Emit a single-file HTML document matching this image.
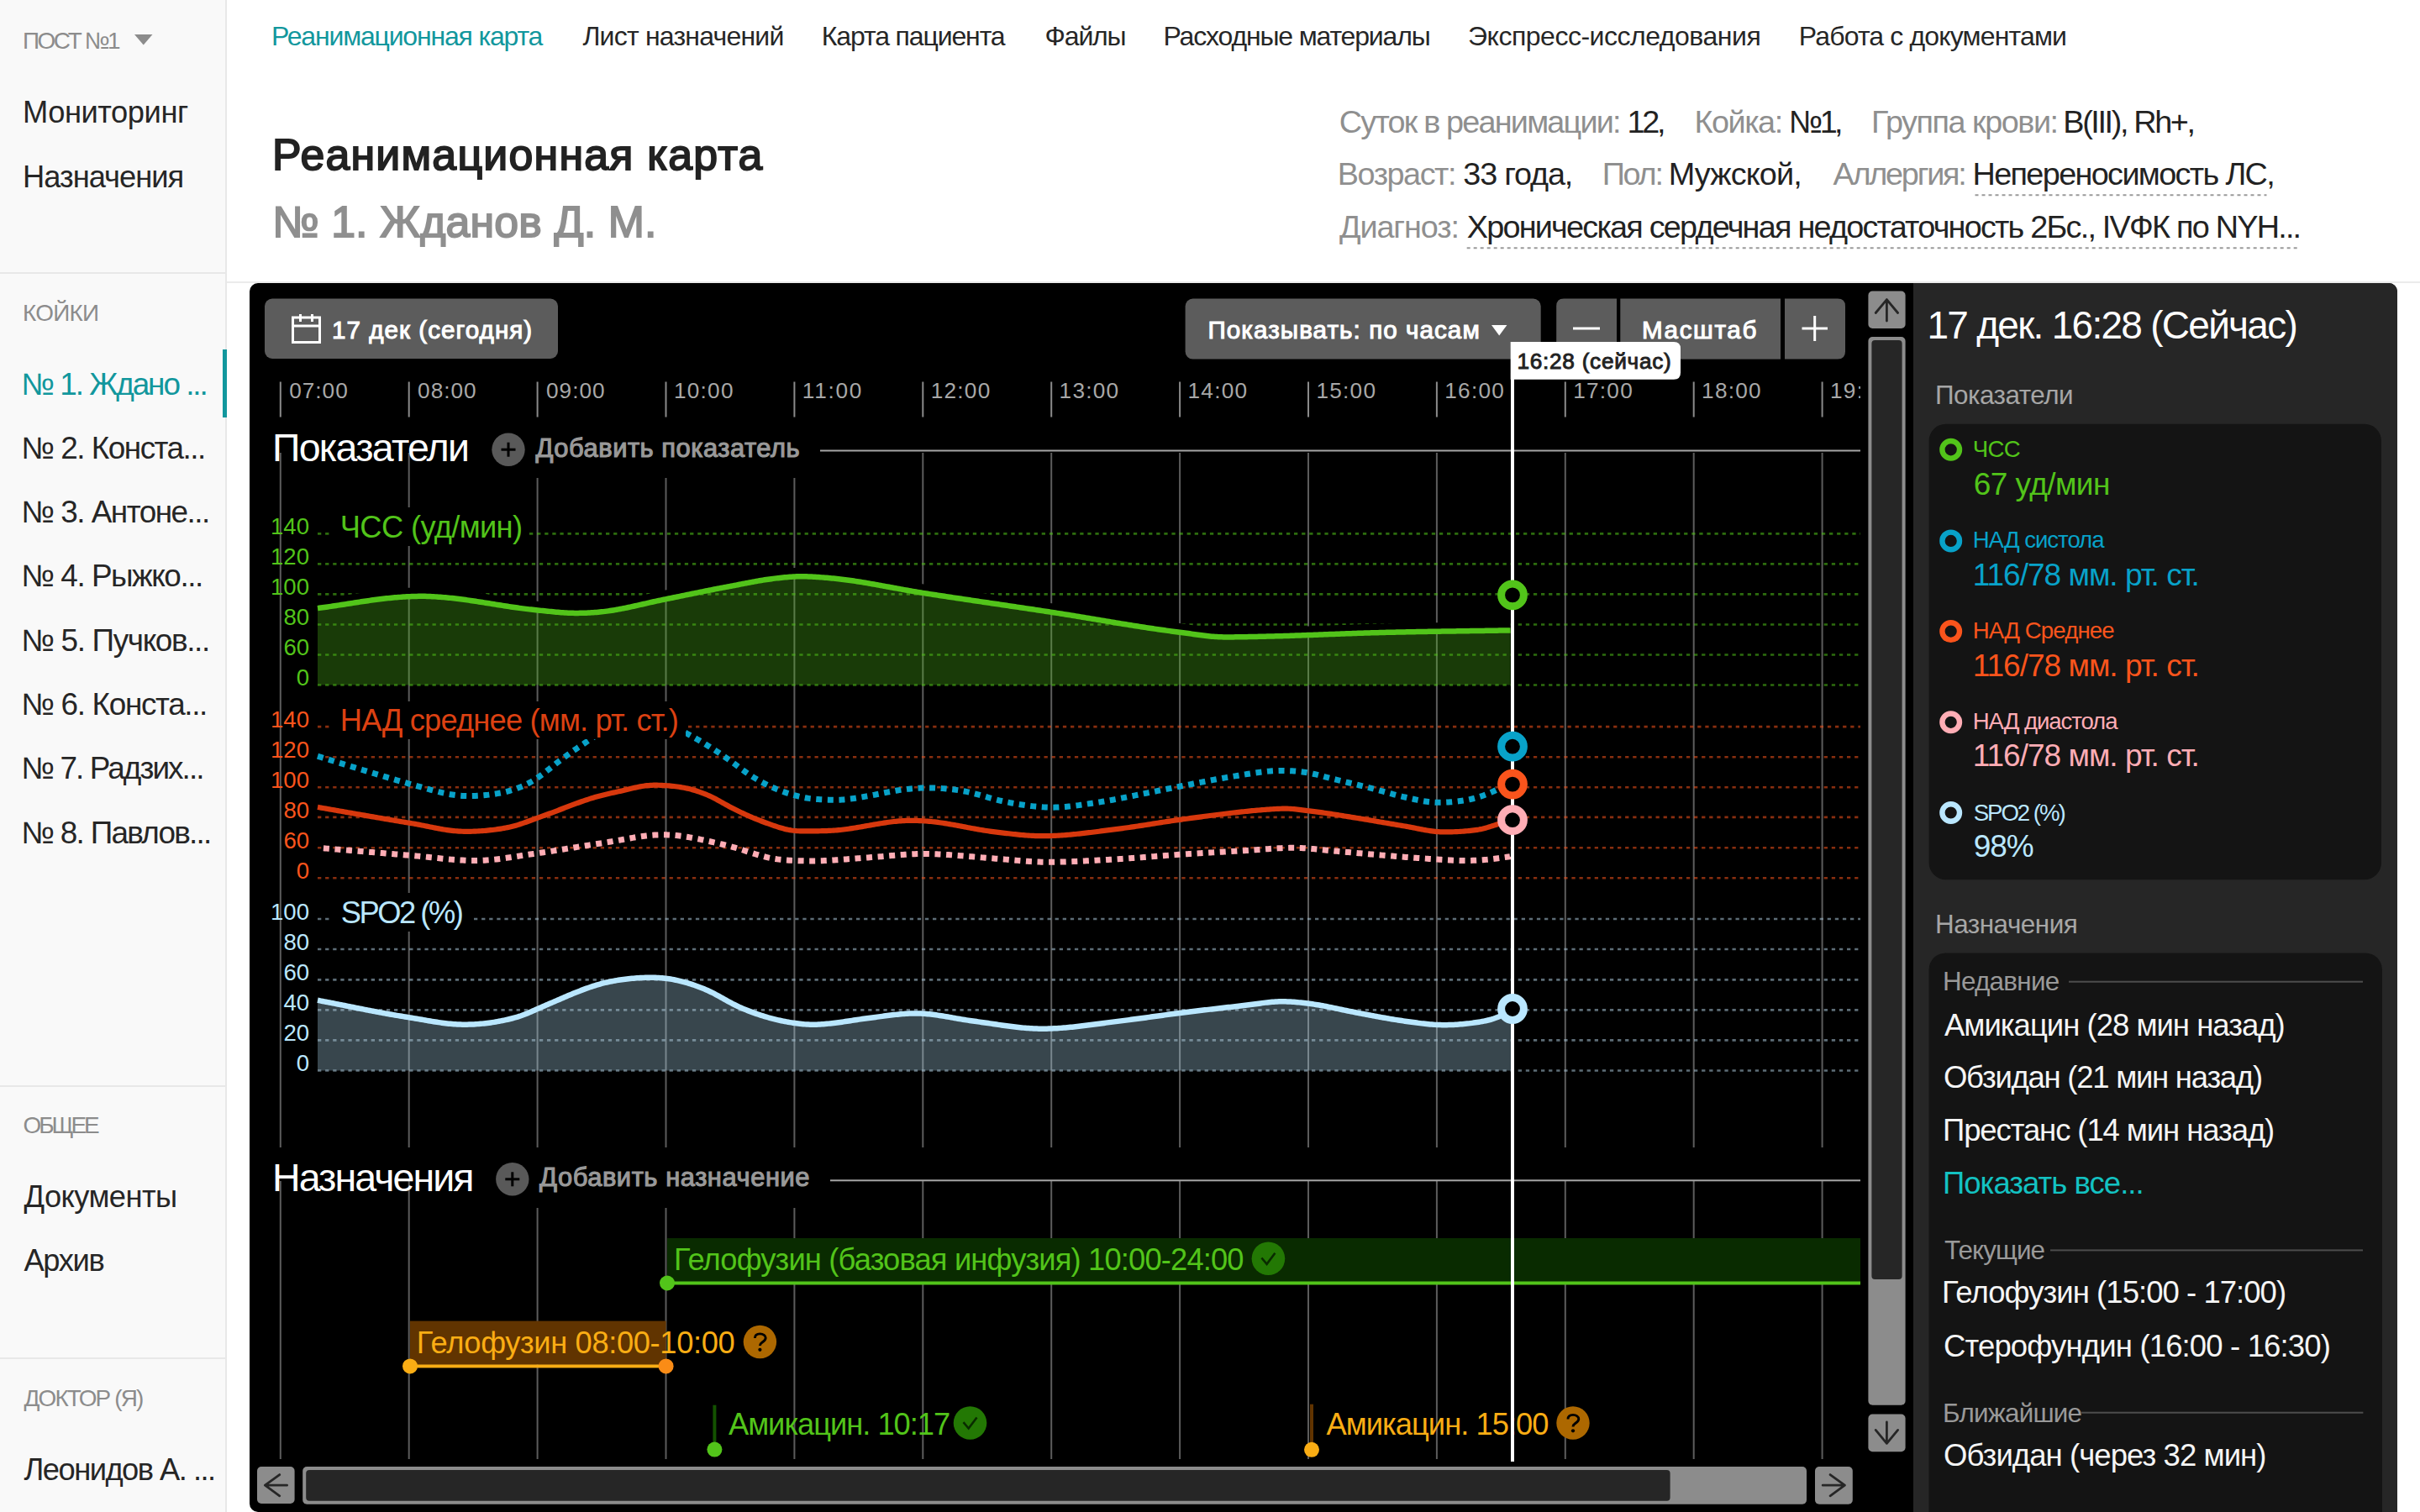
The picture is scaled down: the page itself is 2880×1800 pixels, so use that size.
<!DOCTYPE html>
<html><head><meta charset="utf-8"><style>
html,body{margin:0;padding:0;width:2880px;height:1800px;overflow:hidden;background:#fff;}
body{position:relative;font-family:"Liberation Sans", sans-serif;}
.t{position:absolute;line-height:0;white-space:nowrap;font-family:"Liberation Sans", sans-serif;}
.abs{position:absolute;}
svg{position:absolute;left:0;top:0;}
</style></head><body>
<div class="abs" style="left:0;top:0;width:268px;height:1800px;background:#f9f9f9;"></div>
<div class="abs" style="left:268px;top:0;width:2px;height:1800px;background:#e8e8e8;"></div>
<div class="abs" style="left:0;top:324px;width:268px;height:2px;background:#e8e8e8;"></div>
<div class="abs" style="left:0;top:1291.5px;width:268px;height:2px;background:#e8e8e8;"></div>
<div class="abs" style="left:0;top:1616px;width:268px;height:2px;background:#e8e8e8;"></div>
<div class="abs" style="left:265px;top:416px;width:5px;height:81px;background:#12979d;"></div>
<div class="abs" style="left:270px;top:335px;width:2610px;height:2px;background:#ebebeb;"></div>
<div class="abs" style="left:297px;top:337px;width:2556px;height:1463px;background:#000;border-radius:10px 10px 0 10px;"></div>
<div class="abs" style="left:2277px;top:337px;width:576px;height:1463px;background:#262626;border-radius:0 10px 0 0;"></div>
<svg width="2880" height="1800" viewBox="0 0 2880 1800">
<rect x="315" y="355.5" width="349" height="71.5" rx="9" fill="#5c5c5c"/>
<g fill="none" stroke="#fff" stroke-width="3"><rect x="348.5" y="378" width="32" height="29.5"/><line x1="348.5" y1="388" x2="380.5" y2="388"/><line x1="357.5" y1="374" x2="357.5" y2="383"/><line x1="371.5" y1="374" x2="371.5" y2="383"/></g>
<rect x="1410.6" y="355.5" width="423.1" height="72.1" rx="9" fill="#5c5c5c"/>
<path d="M1775,387 H1793.4 L1784.2,399.5 Z" fill="#fff"/>
<path d="M1861,355.5 H1924 V427.6 H1861 Q1852.2,427.6 1852.2,418.6 V364.5 Q1852.2,355.5 1861,355.5 Z" fill="#5c5c5c"/>
<rect x="1928.3" y="355.5" width="190.7" height="72.1" fill="#5c5c5c"/>
<path d="M2124,355.5 H2187 Q2196,355.5 2196,364.5 V418.6 Q2196,427.6 2187,427.6 H2124 Z" fill="#5c5c5c"/>
<rect x="1872" y="389.5" width="32" height="3" fill="#fff"/>
<rect x="2144.5" y="389.5" width="30.5" height="3" fill="#fff"/>
<rect x="2158.2" y="376" width="3" height="30" fill="#fff"/>
<rect x="2295.6" y="504.8" width="538.4" height="542.4" rx="20" fill="#141414"/>
<rect x="2295.5" y="1134.4" width="539.5" height="720" rx="20" fill="#141414"/>
<rect x="2462" y="1167.7" width="350" height="2" fill="#4d4d4d"/>
<rect x="2440" y="1487.4" width="372" height="2" fill="#4d4d4d"/>
<circle cx="2321.7" cy="535.3" r="10.3" fill="none" stroke="#52c41a" stroke-width="6.4"/>
<circle cx="2321.7" cy="643.9" r="10.3" fill="none" stroke="#08a2c9" stroke-width="6.4"/>
<circle cx="2321.7" cy="751.6" r="10.3" fill="none" stroke="#fa541c" stroke-width="6.4"/>
<circle cx="2321.7" cy="859.8" r="10.3" fill="none" stroke="#ffadb5" stroke-width="6.4"/>
<circle cx="2321.7" cy="967.5" r="10.3" fill="none" stroke="#bae7ff" stroke-width="6.4"/>
<line x1="2350.5" y1="232.3" x2="2697.5" y2="232.3" stroke="#9a9a9a" stroke-width="2" stroke-dasharray="4 4"/>
<line x1="1745.7" y1="295.2" x2="2735.5" y2="295.2" stroke="#9a9a9a" stroke-width="2" stroke-dasharray="4 4"/>
<path d="M160,41 H181.5 L170.75,53.6 Z" fill="#8c8c8c"/>
<rect x="332.8" y="539" width="2" height="827" fill="rgba(255,255,255,0.36)"/>
<rect x="332.8" y="1406" width="2" height="331" fill="rgba(255,255,255,0.36)"/>
<rect x="485.7" y="539" width="2" height="827" fill="rgba(255,255,255,0.36)"/>
<rect x="485.7" y="1406" width="2" height="331" fill="rgba(255,255,255,0.36)"/>
<rect x="638.6" y="539" width="2" height="827" fill="rgba(255,255,255,0.36)"/>
<rect x="638.6" y="1406" width="2" height="331" fill="rgba(255,255,255,0.36)"/>
<rect x="791.5" y="539" width="2" height="827" fill="rgba(255,255,255,0.36)"/>
<rect x="791.5" y="1406" width="2" height="331" fill="rgba(255,255,255,0.36)"/>
<rect x="944.4" y="539" width="2" height="827" fill="rgba(255,255,255,0.36)"/>
<rect x="944.4" y="1406" width="2" height="331" fill="rgba(255,255,255,0.36)"/>
<rect x="1097.3" y="539" width="2" height="827" fill="rgba(255,255,255,0.36)"/>
<rect x="1097.3" y="1406" width="2" height="331" fill="rgba(255,255,255,0.36)"/>
<rect x="1250.2" y="539" width="2" height="827" fill="rgba(255,255,255,0.36)"/>
<rect x="1250.2" y="1406" width="2" height="331" fill="rgba(255,255,255,0.36)"/>
<rect x="1403.1" y="539" width="2" height="827" fill="rgba(255,255,255,0.36)"/>
<rect x="1403.1" y="1406" width="2" height="331" fill="rgba(255,255,255,0.36)"/>
<rect x="1556.0" y="539" width="2" height="827" fill="rgba(255,255,255,0.36)"/>
<rect x="1556.0" y="1406" width="2" height="331" fill="rgba(255,255,255,0.36)"/>
<rect x="1708.9" y="539" width="2" height="827" fill="rgba(255,255,255,0.36)"/>
<rect x="1708.9" y="1406" width="2" height="331" fill="rgba(255,255,255,0.36)"/>
<rect x="1861.8" y="539" width="2" height="827" fill="rgba(255,255,255,0.36)"/>
<rect x="1861.8" y="1406" width="2" height="331" fill="rgba(255,255,255,0.36)"/>
<rect x="2014.7" y="539" width="2" height="827" fill="rgba(255,255,255,0.36)"/>
<rect x="2014.7" y="1406" width="2" height="331" fill="rgba(255,255,255,0.36)"/>
<rect x="2167.6" y="539" width="2" height="827" fill="rgba(255,255,255,0.36)"/>
<rect x="2167.6" y="1406" width="2" height="331" fill="rgba(255,255,255,0.36)"/>
<rect x="570" y="537" width="406" height="32" fill="#000"/>
<rect x="575" y="1402" width="413" height="36" fill="#000"/>
<rect x="396" y="604" width="234" height="46" fill="#000"/>
<rect x="396" y="835" width="420" height="45" fill="#000"/>
<rect x="396" y="1063" width="166" height="46" fill="#000"/>
<path d="M378.0,724.10 L380.0,723.83 L382.0,723.56 L384.0,723.28 L386.0,723.00 L388.0,722.72 L390.0,722.44 L392.0,722.15 L394.0,721.86 L396.0,721.56 L398.0,721.26 L400.0,720.96 L402.0,720.66 L404.0,720.35 L406.0,720.04 L408.0,719.73 L410.0,719.42 L412.0,719.11 L414.0,718.80 L416.0,718.49 L418.0,718.18 L420.0,717.86 L422.0,717.56 L424.0,717.25 L426.0,716.94 L428.0,716.64 L430.0,716.33 L432.0,716.03 L434.0,715.74 L436.0,715.45 L438.0,715.16 L440.0,714.87 L442.0,714.59 L444.0,714.32 L446.0,714.05 L448.0,713.78 L450.0,713.53 L452.0,713.27 L454.0,713.03 L456.0,712.79 L458.0,712.56 L460.0,712.34 L462.0,712.12 L464.0,711.91 L466.0,711.72 L468.0,711.53 L470.0,711.35 L472.0,711.18 L474.0,711.02 L476.0,710.87 L478.0,710.73 L480.0,710.60 L482.0,710.48 L484.0,710.37 L486.0,710.27 L488.0,710.18 L490.0,710.10 L492.0,710.03 L494.0,709.96 L496.0,709.91 L498.0,709.87 L500.0,709.84 L502.0,709.83 L504.0,709.84 L506.0,709.86 L508.0,709.91 L510.0,709.97 L512.0,710.05 L514.0,710.15 L516.0,710.26 L518.0,710.38 L520.0,710.51 L522.0,710.65 L524.0,710.80 L526.0,710.96 L528.0,711.13 L530.0,711.30 L532.0,711.49 L534.0,711.68 L536.0,711.89 L538.0,712.10 L540.0,712.32 L542.0,712.55 L544.0,712.79 L546.0,713.03 L548.0,713.28 L550.0,713.54 L552.0,713.81 L554.0,714.08 L556.0,714.36 L558.0,714.64 L560.0,714.93 L562.0,715.22 L564.0,715.52 L566.0,715.82 L568.0,716.13 L570.0,716.44 L572.0,716.75 L574.0,717.06 L576.0,717.38 L578.0,717.69 L580.0,718.01 L582.0,718.33 L584.0,718.65 L586.0,718.98 L588.0,719.30 L590.0,719.62 L592.0,719.94 L594.0,720.25 L596.0,720.57 L598.0,720.89 L600.0,721.20 L602.0,721.51 L604.0,721.82 L606.0,722.12 L608.0,722.42 L610.0,722.72 L612.0,723.01 L614.0,723.29 L616.0,723.58 L618.0,723.85 L620.0,724.12 L622.0,724.39 L624.0,724.64 L626.0,724.89 L628.0,725.14 L630.0,725.37 L632.0,725.60 L634.0,725.82 L636.0,726.04 L638.0,726.25 L640.0,726.46 L642.0,726.67 L644.0,726.87 L646.0,727.07 L648.0,727.28 L650.0,727.48 L652.0,727.69 L654.0,727.89 L656.0,728.09 L658.0,728.29 L660.0,728.48 L662.0,728.66 L664.0,728.84 L666.0,729.01 L668.0,729.17 L670.0,729.31 L672.0,729.45 L674.0,729.56 L676.0,729.66 L678.0,729.74 L680.0,729.81 L682.0,729.86 L684.0,729.88 L686.0,729.89 L688.0,729.89 L690.0,729.87 L692.0,729.83 L694.0,729.78 L696.0,729.71 L698.0,729.63 L700.0,729.54 L702.0,729.44 L704.0,729.32 L706.0,729.19 L708.0,729.05 L710.0,728.89 L712.0,728.73 L714.0,728.54 L716.0,728.34 L718.0,728.12 L720.0,727.89 L722.0,727.64 L724.0,727.37 L726.0,727.08 L728.0,726.78 L730.0,726.46 L732.0,726.13 L734.0,725.78 L736.0,725.42 L738.0,725.05 L740.0,724.67 L742.0,724.27 L744.0,723.87 L746.0,723.46 L748.0,723.04 L750.0,722.61 L752.0,722.17 L754.0,721.73 L756.0,721.28 L758.0,720.83 L760.0,720.38 L762.0,719.93 L764.0,719.47 L766.0,719.01 L768.0,718.55 L770.0,718.10 L772.0,717.64 L774.0,717.19 L776.0,716.74 L778.0,716.29 L780.0,715.85 L782.0,715.42 L784.0,714.99 L786.0,714.56 L788.0,714.14 L790.0,713.73 L792.0,713.32 L794.0,712.91 L796.0,712.51 L798.0,712.10 L800.0,711.70 L802.0,711.29 L804.0,710.89 L806.0,710.48 L808.0,710.07 L810.0,709.67 L812.0,709.26 L814.0,708.85 L816.0,708.44 L818.0,708.03 L820.0,707.62 L822.0,707.21 L824.0,706.80 L826.0,706.39 L828.0,705.98 L830.0,705.57 L832.0,705.16 L834.0,704.75 L836.0,704.35 L838.0,703.94 L840.0,703.54 L842.0,703.14 L844.0,702.74 L846.0,702.34 L848.0,701.94 L850.0,701.55 L852.0,701.16 L854.0,700.77 L856.0,700.38 L858.0,700.00 L860.0,699.62 L862.0,699.24 L864.0,698.86 L866.0,698.48 L868.0,698.10 L870.0,697.72 L872.0,697.34 L874.0,696.96 L876.0,696.57 L878.0,696.19 L880.0,695.80 L882.0,695.41 L884.0,695.03 L886.0,694.64 L888.0,694.26 L890.0,693.87 L892.0,693.50 L894.0,693.12 L896.0,692.75 L898.0,692.38 L900.0,692.02 L902.0,691.67 L904.0,691.32 L906.0,690.99 L908.0,690.66 L910.0,690.33 L912.0,690.02 L914.0,689.72 L916.0,689.44 L918.0,689.16 L920.0,688.89 L922.0,688.64 L924.0,688.39 L926.0,688.16 L928.0,687.94 L930.0,687.72 L932.0,687.52 L934.0,687.32 L936.0,687.14 L938.0,686.97 L940.0,686.81 L942.0,686.66 L944.0,686.54 L946.0,686.44 L948.0,686.35 L950.0,686.29 L952.0,686.26 L954.0,686.25 L956.0,686.26 L958.0,686.29 L960.0,686.34 L962.0,686.41 L964.0,686.49 L966.0,686.59 L968.0,686.70 L970.0,686.82 L972.0,686.95 L974.0,687.09 L976.0,687.23 L978.0,687.38 L980.0,687.54 L982.0,687.70 L984.0,687.86 L986.0,688.04 L988.0,688.22 L990.0,688.40 L992.0,688.59 L994.0,688.80 L996.0,689.01 L998.0,689.23 L1000.0,689.46 L1002.0,689.70 L1004.0,689.94 L1006.0,690.20 L1008.0,690.46 L1010.0,690.74 L1012.0,691.01 L1014.0,691.30 L1016.0,691.59 L1018.0,691.89 L1020.0,692.20 L1022.0,692.51 L1024.0,692.83 L1026.0,693.16 L1028.0,693.49 L1030.0,693.82 L1032.0,694.16 L1034.0,694.50 L1036.0,694.85 L1038.0,695.20 L1040.0,695.55 L1042.0,695.91 L1044.0,696.26 L1046.0,696.63 L1048.0,696.99 L1050.0,697.35 L1052.0,697.72 L1054.0,698.09 L1056.0,698.46 L1058.0,698.82 L1060.0,699.19 L1062.0,699.56 L1064.0,699.93 L1066.0,700.30 L1068.0,700.66 L1070.0,701.03 L1072.0,701.39 L1074.0,701.75 L1076.0,702.11 L1078.0,702.47 L1080.0,702.82 L1082.0,703.17 L1084.0,703.52 L1086.0,703.86 L1088.0,704.20 L1090.0,704.54 L1092.0,704.87 L1094.0,705.20 L1096.0,705.52 L1098.0,705.84 L1100.0,706.15 L1102.0,706.47 L1104.0,706.78 L1106.0,707.09 L1108.0,707.40 L1110.0,707.70 L1112.0,708.01 L1114.0,708.32 L1116.0,708.62 L1118.0,708.92 L1120.0,709.23 L1122.0,709.53 L1124.0,709.83 L1126.0,710.13 L1128.0,710.44 L1130.0,710.74 L1132.0,711.04 L1134.0,711.34 L1136.0,711.64 L1138.0,711.94 L1140.0,712.24 L1142.0,712.53 L1144.0,712.83 L1146.0,713.13 L1148.0,713.43 L1150.0,713.73 L1152.0,714.02 L1154.0,714.32 L1156.0,714.62 L1158.0,714.91 L1160.0,715.21 L1162.0,715.50 L1164.0,715.80 L1166.0,716.10 L1168.0,716.39 L1170.0,716.69 L1172.0,716.98 L1174.0,717.28 L1176.0,717.57 L1178.0,717.87 L1180.0,718.16 L1182.0,718.46 L1184.0,718.75 L1186.0,719.05 L1188.0,719.34 L1190.0,719.64 L1192.0,719.93 L1194.0,720.23 L1196.0,720.53 L1198.0,720.82 L1200.0,721.12 L1202.0,721.41 L1204.0,721.71 L1206.0,722.01 L1208.0,722.30 L1210.0,722.60 L1212.0,722.90 L1214.0,723.19 L1216.0,723.49 L1218.0,723.79 L1220.0,724.09 L1222.0,724.38 L1224.0,724.68 L1226.0,724.98 L1228.0,725.28 L1230.0,725.58 L1232.0,725.88 L1234.0,726.18 L1236.0,726.48 L1238.0,726.79 L1240.0,727.09 L1242.0,727.39 L1244.0,727.69 L1246.0,728.00 L1248.0,728.30 L1250.0,728.61 L1252.0,728.92 L1254.0,729.22 L1256.0,729.53 L1258.0,729.84 L1260.0,730.16 L1262.0,730.47 L1264.0,730.79 L1266.0,731.10 L1268.0,731.42 L1270.0,731.74 L1272.0,732.06 L1274.0,732.39 L1276.0,732.71 L1278.0,733.04 L1280.0,733.36 L1282.0,733.69 L1284.0,734.02 L1286.0,734.35 L1288.0,734.68 L1290.0,735.01 L1292.0,735.34 L1294.0,735.67 L1296.0,736.01 L1298.0,736.34 L1300.0,736.68 L1302.0,737.01 L1304.0,737.34 L1306.0,737.68 L1308.0,738.01 L1310.0,738.35 L1312.0,738.68 L1314.0,739.02 L1316.0,739.35 L1318.0,739.69 L1320.0,740.02 L1322.0,740.35 L1324.0,740.69 L1326.0,741.02 L1328.0,741.35 L1330.0,741.68 L1332.0,742.01 L1334.0,742.34 L1336.0,742.67 L1338.0,742.99 L1340.0,743.32 L1342.0,743.65 L1344.0,743.97 L1346.0,744.29 L1348.0,744.61 L1350.0,744.93 L1352.0,745.25 L1354.0,745.56 L1356.0,745.88 L1358.0,746.19 L1360.0,746.50 L1362.0,746.81 L1364.0,747.12 L1366.0,747.42 L1368.0,747.72 L1370.0,748.02 L1372.0,748.32 L1374.0,748.61 L1376.0,748.91 L1378.0,749.20 L1380.0,749.48 L1382.0,749.77 L1384.0,750.05 L1386.0,750.33 L1388.0,750.60 L1390.0,750.88 L1392.0,751.15 L1394.0,751.41 L1396.0,751.68 L1398.0,751.94 L1400.0,752.20 L1402.0,752.46 L1404.0,752.72 L1406.0,752.98 L1408.0,753.25 L1410.0,753.51 L1412.0,753.78 L1414.0,754.06 L1416.0,754.34 L1418.0,754.62 L1420.0,754.91 L1422.0,755.19 L1424.0,755.48 L1426.0,755.76 L1428.0,756.03 L1430.0,756.30 L1432.0,756.56 L1434.0,756.81 L1436.0,757.05 L1438.0,757.27 L1440.0,757.48 L1442.0,757.67 L1444.0,757.84 L1446.0,757.98 L1448.0,758.11 L1450.0,758.21 L1452.0,758.29 L1454.0,758.35 L1456.0,758.40 L1458.0,758.42 L1460.0,758.44 L1462.0,758.44 L1464.0,758.43 L1466.0,758.42 L1468.0,758.40 L1470.0,758.37 L1472.0,758.35 L1474.0,758.32 L1476.0,758.28 L1478.0,758.25 L1480.0,758.21 L1482.0,758.17 L1484.0,758.13 L1486.0,758.09 L1488.0,758.05 L1490.0,758.01 L1492.0,757.97 L1494.0,757.93 L1496.0,757.88 L1498.0,757.84 L1500.0,757.80 L1502.0,757.75 L1504.0,757.71 L1506.0,757.66 L1508.0,757.62 L1510.0,757.57 L1512.0,757.52 L1514.0,757.47 L1516.0,757.42 L1518.0,757.36 L1520.0,757.31 L1522.0,757.25 L1524.0,757.19 L1526.0,757.13 L1528.0,757.07 L1530.0,757.01 L1532.0,756.95 L1534.0,756.88 L1536.0,756.82 L1538.0,756.75 L1540.0,756.68 L1542.0,756.61 L1544.0,756.54 L1546.0,756.47 L1548.0,756.40 L1550.0,756.33 L1552.0,756.26 L1554.0,756.19 L1556.0,756.11 L1558.0,756.04 L1560.0,755.96 L1562.0,755.89 L1564.0,755.81 L1566.0,755.74 L1568.0,755.66 L1570.0,755.58 L1572.0,755.51 L1574.0,755.43 L1576.0,755.35 L1578.0,755.28 L1580.0,755.20 L1582.0,755.12 L1584.0,755.05 L1586.0,754.97 L1588.0,754.89 L1590.0,754.82 L1592.0,754.74 L1594.0,754.67 L1596.0,754.59 L1598.0,754.52 L1600.0,754.44 L1602.0,754.37 L1604.0,754.29 L1606.0,754.22 L1608.0,754.15 L1610.0,754.08 L1612.0,754.01 L1614.0,753.94 L1616.0,753.87 L1618.0,753.80 L1620.0,753.74 L1622.0,753.67 L1624.0,753.60 L1626.0,753.54 L1628.0,753.48 L1630.0,753.42 L1632.0,753.36 L1634.0,753.30 L1636.0,753.24 L1638.0,753.18 L1640.0,753.13 L1642.0,753.08 L1644.0,753.02 L1646.0,752.97 L1648.0,752.92 L1650.0,752.87 L1652.0,752.82 L1654.0,752.78 L1656.0,752.73 L1658.0,752.68 L1660.0,752.64 L1662.0,752.59 L1664.0,752.55 L1666.0,752.51 L1668.0,752.47 L1670.0,752.43 L1672.0,752.38 L1674.0,752.34 L1676.0,752.30 L1678.0,752.27 L1680.0,752.23 L1682.0,752.19 L1684.0,752.15 L1686.0,752.12 L1688.0,752.08 L1690.0,752.04 L1692.0,752.01 L1694.0,751.97 L1696.0,751.94 L1698.0,751.91 L1700.0,751.87 L1702.0,751.84 L1704.0,751.81 L1706.0,751.78 L1708.0,751.74 L1710.0,751.71 L1712.0,751.68 L1714.0,751.65 L1716.0,751.62 L1718.0,751.59 L1720.0,751.56 L1722.0,751.53 L1724.0,751.50 L1726.0,751.47 L1728.0,751.44 L1730.0,751.41 L1732.0,751.38 L1734.0,751.35 L1736.0,751.32 L1738.0,751.29 L1740.0,751.27 L1742.0,751.24 L1744.0,751.21 L1746.0,751.18 L1748.0,751.15 L1750.0,751.12 L1752.0,751.09 L1754.0,751.07 L1756.0,751.04 L1758.0,751.01 L1760.0,750.98 L1762.0,750.95 L1764.0,750.92 L1766.0,750.89 L1768.0,750.86 L1770.0,750.83 L1772.0,750.80 L1774.0,750.77 L1776.0,750.74 L1778.0,750.71 L1780.0,750.68 L1782.0,750.65 L1784.0,750.62 L1786.0,750.59 L1788.0,750.56 L1790.0,750.52 L1792.0,750.49 L1794.0,750.46 L1796.0,750.43 L1797.5,750.40 L1797.5,815.5 L378.0,815.5 Z" fill="#52c41a" fill-opacity="0.3"/>
<path d="M378.0,1190.80 L380.0,1191.18 L382.0,1191.57 L384.0,1191.95 L386.0,1192.33 L388.0,1192.72 L390.0,1193.11 L392.0,1193.50 L394.0,1193.89 L396.0,1194.28 L398.0,1194.67 L400.0,1195.07 L402.0,1195.46 L404.0,1195.86 L406.0,1196.26 L408.0,1196.66 L410.0,1197.05 L412.0,1197.45 L414.0,1197.85 L416.0,1198.25 L418.0,1198.65 L420.0,1199.05 L422.0,1199.44 L424.0,1199.84 L426.0,1200.24 L428.0,1200.63 L430.0,1201.03 L432.0,1201.42 L434.0,1201.82 L436.0,1202.21 L438.0,1202.60 L440.0,1202.98 L442.0,1203.37 L444.0,1203.75 L446.0,1204.13 L448.0,1204.51 L450.0,1204.89 L452.0,1205.26 L454.0,1205.64 L456.0,1206.00 L458.0,1206.37 L460.0,1206.73 L462.0,1207.09 L464.0,1207.45 L466.0,1207.80 L468.0,1208.15 L470.0,1208.49 L472.0,1208.83 L474.0,1209.17 L476.0,1209.50 L478.0,1209.83 L480.0,1210.16 L482.0,1210.48 L484.0,1210.81 L486.0,1211.13 L488.0,1211.45 L490.0,1211.78 L492.0,1212.11 L494.0,1212.44 L496.0,1212.78 L498.0,1213.12 L500.0,1213.46 L502.0,1213.80 L504.0,1214.15 L506.0,1214.49 L508.0,1214.84 L510.0,1215.18 L512.0,1215.52 L514.0,1215.85 L516.0,1216.18 L518.0,1216.50 L520.0,1216.81 L522.0,1217.11 L524.0,1217.40 L526.0,1217.68 L528.0,1217.95 L530.0,1218.20 L532.0,1218.43 L534.0,1218.65 L536.0,1218.85 L538.0,1219.02 L540.0,1219.18 L542.0,1219.32 L544.0,1219.43 L546.0,1219.53 L548.0,1219.60 L550.0,1219.64 L552.0,1219.67 L554.0,1219.67 L556.0,1219.65 L558.0,1219.61 L560.0,1219.55 L562.0,1219.47 L564.0,1219.38 L566.0,1219.26 L568.0,1219.13 L570.0,1218.98 L572.0,1218.81 L574.0,1218.63 L576.0,1218.43 L578.0,1218.21 L580.0,1217.97 L582.0,1217.71 L584.0,1217.44 L586.0,1217.15 L588.0,1216.84 L590.0,1216.51 L592.0,1216.17 L594.0,1215.81 L596.0,1215.43 L598.0,1215.03 L600.0,1214.62 L602.0,1214.18 L604.0,1213.73 L606.0,1213.26 L608.0,1212.77 L610.0,1212.26 L612.0,1211.72 L614.0,1211.16 L616.0,1210.56 L618.0,1209.92 L620.0,1209.25 L622.0,1208.53 L624.0,1207.77 L626.0,1206.98 L628.0,1206.15 L630.0,1205.30 L632.0,1204.43 L634.0,1203.55 L636.0,1202.66 L638.0,1201.78 L640.0,1200.90 L642.0,1200.03 L644.0,1199.16 L646.0,1198.30 L648.0,1197.43 L650.0,1196.57 L652.0,1195.71 L654.0,1194.84 L656.0,1193.98 L658.0,1193.11 L660.0,1192.24 L662.0,1191.37 L664.0,1190.50 L666.0,1189.64 L668.0,1188.77 L670.0,1187.91 L672.0,1187.05 L674.0,1186.20 L676.0,1185.35 L678.0,1184.51 L680.0,1183.68 L682.0,1182.86 L684.0,1182.04 L686.0,1181.24 L688.0,1180.44 L690.0,1179.66 L692.0,1178.90 L694.0,1178.14 L696.0,1177.40 L698.0,1176.68 L700.0,1175.97 L702.0,1175.28 L704.0,1174.60 L706.0,1173.95 L708.0,1173.31 L710.0,1172.70 L712.0,1172.11 L714.0,1171.54 L716.0,1170.99 L718.0,1170.47 L720.0,1169.97 L722.0,1169.50 L724.0,1169.05 L726.0,1168.62 L728.0,1168.22 L730.0,1167.84 L732.0,1167.48 L734.0,1167.14 L736.0,1166.82 L738.0,1166.51 L740.0,1166.23 L742.0,1165.96 L744.0,1165.70 L746.0,1165.46 L748.0,1165.24 L750.0,1165.03 L752.0,1164.84 L754.0,1164.66 L756.0,1164.49 L758.0,1164.35 L760.0,1164.21 L762.0,1164.09 L764.0,1163.99 L766.0,1163.90 L768.0,1163.83 L770.0,1163.78 L772.0,1163.75 L774.0,1163.73 L776.0,1163.74 L778.0,1163.76 L780.0,1163.82 L782.0,1163.90 L784.0,1164.01 L786.0,1164.14 L788.0,1164.31 L790.0,1164.50 L792.0,1164.73 L794.0,1164.98 L796.0,1165.27 L798.0,1165.58 L800.0,1165.92 L802.0,1166.29 L804.0,1166.69 L806.0,1167.12 L808.0,1167.57 L810.0,1168.05 L812.0,1168.55 L814.0,1169.08 L816.0,1169.64 L818.0,1170.22 L820.0,1170.82 L822.0,1171.45 L824.0,1172.10 L826.0,1172.77 L828.0,1173.47 L830.0,1174.19 L832.0,1174.94 L834.0,1175.71 L836.0,1176.50 L838.0,1177.33 L840.0,1178.18 L842.0,1179.07 L844.0,1179.99 L846.0,1180.95 L848.0,1181.94 L850.0,1182.97 L852.0,1184.02 L854.0,1185.10 L856.0,1186.20 L858.0,1187.32 L860.0,1188.44 L862.0,1189.57 L864.0,1190.69 L866.0,1191.80 L868.0,1192.89 L870.0,1193.96 L872.0,1195.01 L874.0,1196.02 L876.0,1197.01 L878.0,1197.96 L880.0,1198.88 L882.0,1199.78 L884.0,1200.65 L886.0,1201.49 L888.0,1202.31 L890.0,1203.11 L892.0,1203.89 L894.0,1204.65 L896.0,1205.40 L898.0,1206.12 L900.0,1206.83 L902.0,1207.51 L904.0,1208.18 L906.0,1208.83 L908.0,1209.46 L910.0,1210.08 L912.0,1210.67 L914.0,1211.25 L916.0,1211.81 L918.0,1212.35 L920.0,1212.87 L922.0,1213.37 L924.0,1213.86 L926.0,1214.32 L928.0,1214.77 L930.0,1215.20 L932.0,1215.62 L934.0,1216.01 L936.0,1216.39 L938.0,1216.75 L940.0,1217.09 L942.0,1217.41 L944.0,1217.72 L946.0,1218.01 L948.0,1218.29 L950.0,1218.55 L952.0,1218.78 L954.0,1219.00 L956.0,1219.20 L958.0,1219.37 L960.0,1219.51 L962.0,1219.62 L964.0,1219.70 L966.0,1219.75 L968.0,1219.76 L970.0,1219.73 L972.0,1219.68 L974.0,1219.59 L976.0,1219.47 L978.0,1219.34 L980.0,1219.18 L982.0,1219.01 L984.0,1218.83 L986.0,1218.63 L988.0,1218.42 L990.0,1218.21 L992.0,1217.98 L994.0,1217.74 L996.0,1217.48 L998.0,1217.22 L1000.0,1216.95 L1002.0,1216.67 L1004.0,1216.38 L1006.0,1216.08 L1008.0,1215.78 L1010.0,1215.48 L1012.0,1215.17 L1014.0,1214.87 L1016.0,1214.56 L1018.0,1214.25 L1020.0,1213.95 L1022.0,1213.65 L1024.0,1213.36 L1026.0,1213.07 L1028.0,1212.79 L1030.0,1212.51 L1032.0,1212.24 L1034.0,1211.97 L1036.0,1211.70 L1038.0,1211.44 L1040.0,1211.18 L1042.0,1210.91 L1044.0,1210.65 L1046.0,1210.38 L1048.0,1210.12 L1050.0,1209.85 L1052.0,1209.59 L1054.0,1209.33 L1056.0,1209.07 L1058.0,1208.82 L1060.0,1208.57 L1062.0,1208.33 L1064.0,1208.10 L1066.0,1207.88 L1068.0,1207.67 L1070.0,1207.48 L1072.0,1207.29 L1074.0,1207.12 L1076.0,1206.97 L1078.0,1206.84 L1080.0,1206.72 L1082.0,1206.62 L1084.0,1206.55 L1086.0,1206.49 L1088.0,1206.47 L1090.0,1206.46 L1092.0,1206.48 L1094.0,1206.53 L1096.0,1206.61 L1098.0,1206.71 L1100.0,1206.83 L1102.0,1206.98 L1104.0,1207.16 L1106.0,1207.35 L1108.0,1207.57 L1110.0,1207.81 L1112.0,1208.06 L1114.0,1208.34 L1116.0,1208.62 L1118.0,1208.92 L1120.0,1209.23 L1122.0,1209.56 L1124.0,1209.89 L1126.0,1210.23 L1128.0,1210.57 L1130.0,1210.92 L1132.0,1211.27 L1134.0,1211.63 L1136.0,1211.98 L1138.0,1212.33 L1140.0,1212.68 L1142.0,1213.03 L1144.0,1213.37 L1146.0,1213.70 L1148.0,1214.02 L1150.0,1214.34 L1152.0,1214.65 L1154.0,1214.94 L1156.0,1215.23 L1158.0,1215.52 L1160.0,1215.80 L1162.0,1216.08 L1164.0,1216.36 L1166.0,1216.63 L1168.0,1216.92 L1170.0,1217.20 L1172.0,1217.49 L1174.0,1217.78 L1176.0,1218.07 L1178.0,1218.36 L1180.0,1218.66 L1182.0,1218.96 L1184.0,1219.26 L1186.0,1219.55 L1188.0,1219.85 L1190.0,1220.14 L1192.0,1220.43 L1194.0,1220.72 L1196.0,1221.00 L1198.0,1221.28 L1200.0,1221.55 L1202.0,1221.82 L1204.0,1222.07 L1206.0,1222.32 L1208.0,1222.57 L1210.0,1222.80 L1212.0,1223.02 L1214.0,1223.23 L1216.0,1223.43 L1218.0,1223.62 L1220.0,1223.80 L1222.0,1223.96 L1224.0,1224.10 L1226.0,1224.24 L1228.0,1224.35 L1230.0,1224.45 L1232.0,1224.54 L1234.0,1224.60 L1236.0,1224.65 L1238.0,1224.68 L1240.0,1224.70 L1242.0,1224.70 L1244.0,1224.68 L1246.0,1224.64 L1248.0,1224.59 L1250.0,1224.53 L1252.0,1224.45 L1254.0,1224.36 L1256.0,1224.26 L1258.0,1224.15 L1260.0,1224.02 L1262.0,1223.88 L1264.0,1223.74 L1266.0,1223.58 L1268.0,1223.41 L1270.0,1223.23 L1272.0,1223.04 L1274.0,1222.85 L1276.0,1222.65 L1278.0,1222.44 L1280.0,1222.22 L1282.0,1222.00 L1284.0,1221.77 L1286.0,1221.53 L1288.0,1221.29 L1290.0,1221.05 L1292.0,1220.80 L1294.0,1220.54 L1296.0,1220.29 L1298.0,1220.03 L1300.0,1219.76 L1302.0,1219.50 L1304.0,1219.24 L1306.0,1218.97 L1308.0,1218.70 L1310.0,1218.44 L1312.0,1218.17 L1314.0,1217.91 L1316.0,1217.64 L1318.0,1217.38 L1320.0,1217.12 L1322.0,1216.86 L1324.0,1216.60 L1326.0,1216.35 L1328.0,1216.10 L1330.0,1215.85 L1332.0,1215.60 L1334.0,1215.35 L1336.0,1215.11 L1338.0,1214.86 L1340.0,1214.61 L1342.0,1214.35 L1344.0,1214.10 L1346.0,1213.84 L1348.0,1213.58 L1350.0,1213.31 L1352.0,1213.05 L1354.0,1212.78 L1356.0,1212.51 L1358.0,1212.24 L1360.0,1211.97 L1362.0,1211.70 L1364.0,1211.42 L1366.0,1211.15 L1368.0,1210.87 L1370.0,1210.59 L1372.0,1210.32 L1374.0,1210.04 L1376.0,1209.76 L1378.0,1209.48 L1380.0,1209.21 L1382.0,1208.93 L1384.0,1208.66 L1386.0,1208.39 L1388.0,1208.11 L1390.0,1207.84 L1392.0,1207.57 L1394.0,1207.31 L1396.0,1207.04 L1398.0,1206.78 L1400.0,1206.52 L1402.0,1206.26 L1404.0,1206.00 L1406.0,1205.75 L1408.0,1205.50 L1410.0,1205.25 L1412.0,1205.00 L1414.0,1204.75 L1416.0,1204.51 L1418.0,1204.26 L1420.0,1204.02 L1422.0,1203.78 L1424.0,1203.53 L1426.0,1203.29 L1428.0,1203.05 L1430.0,1202.82 L1432.0,1202.58 L1434.0,1202.34 L1436.0,1202.11 L1438.0,1201.87 L1440.0,1201.64 L1442.0,1201.40 L1444.0,1201.17 L1446.0,1200.94 L1448.0,1200.71 L1450.0,1200.48 L1452.0,1200.25 L1454.0,1200.02 L1456.0,1199.79 L1458.0,1199.56 L1460.0,1199.33 L1462.0,1199.10 L1464.0,1198.88 L1466.0,1198.65 L1468.0,1198.42 L1470.0,1198.20 L1472.0,1197.97 L1474.0,1197.74 L1476.0,1197.51 L1478.0,1197.28 L1480.0,1197.04 L1482.0,1196.80 L1484.0,1196.56 L1486.0,1196.30 L1488.0,1196.04 L1490.0,1195.78 L1492.0,1195.51 L1494.0,1195.23 L1496.0,1194.96 L1498.0,1194.68 L1500.0,1194.41 L1502.0,1194.15 L1504.0,1193.90 L1506.0,1193.65 L1508.0,1193.42 L1510.0,1193.20 L1512.0,1193.00 L1514.0,1192.82 L1516.0,1192.67 L1518.0,1192.54 L1520.0,1192.43 L1522.0,1192.35 L1524.0,1192.30 L1526.0,1192.28 L1528.0,1192.29 L1530.0,1192.32 L1532.0,1192.38 L1534.0,1192.46 L1536.0,1192.57 L1538.0,1192.70 L1540.0,1192.85 L1542.0,1193.01 L1544.0,1193.19 L1546.0,1193.39 L1548.0,1193.59 L1550.0,1193.81 L1552.0,1194.04 L1554.0,1194.27 L1556.0,1194.52 L1558.0,1194.78 L1560.0,1195.05 L1562.0,1195.33 L1564.0,1195.62 L1566.0,1195.93 L1568.0,1196.25 L1570.0,1196.58 L1572.0,1196.93 L1574.0,1197.29 L1576.0,1197.66 L1578.0,1198.05 L1580.0,1198.44 L1582.0,1198.84 L1584.0,1199.25 L1586.0,1199.66 L1588.0,1200.08 L1590.0,1200.50 L1592.0,1200.92 L1594.0,1201.35 L1596.0,1201.77 L1598.0,1202.20 L1600.0,1202.62 L1602.0,1203.04 L1604.0,1203.45 L1606.0,1203.86 L1608.0,1204.27 L1610.0,1204.67 L1612.0,1205.06 L1614.0,1205.45 L1616.0,1205.83 L1618.0,1206.22 L1620.0,1206.59 L1622.0,1206.97 L1624.0,1207.35 L1626.0,1207.72 L1628.0,1208.10 L1630.0,1208.48 L1632.0,1208.85 L1634.0,1209.23 L1636.0,1209.60 L1638.0,1209.97 L1640.0,1210.34 L1642.0,1210.71 L1644.0,1211.08 L1646.0,1211.44 L1648.0,1211.80 L1650.0,1212.15 L1652.0,1212.50 L1654.0,1212.84 L1656.0,1213.18 L1658.0,1213.51 L1660.0,1213.84 L1662.0,1214.16 L1664.0,1214.47 L1666.0,1214.78 L1668.0,1215.07 L1670.0,1215.37 L1672.0,1215.66 L1674.0,1215.94 L1676.0,1216.22 L1678.0,1216.50 L1680.0,1216.77 L1682.0,1217.05 L1684.0,1217.32 L1686.0,1217.59 L1688.0,1217.85 L1690.0,1218.11 L1692.0,1218.36 L1694.0,1218.60 L1696.0,1218.83 L1698.0,1219.04 L1700.0,1219.24 L1702.0,1219.43 L1704.0,1219.60 L1706.0,1219.74 L1708.0,1219.87 L1710.0,1219.98 L1712.0,1220.06 L1714.0,1220.12 L1716.0,1220.16 L1718.0,1220.18 L1720.0,1220.17 L1722.0,1220.15 L1724.0,1220.11 L1726.0,1220.05 L1728.0,1219.97 L1730.0,1219.88 L1732.0,1219.78 L1734.0,1219.65 L1736.0,1219.52 L1738.0,1219.36 L1740.0,1219.19 L1742.0,1219.01 L1744.0,1218.81 L1746.0,1218.59 L1748.0,1218.36 L1750.0,1218.12 L1752.0,1217.86 L1754.0,1217.58 L1756.0,1217.30 L1758.0,1216.99 L1760.0,1216.67 L1762.0,1216.34 L1764.0,1215.98 L1766.0,1215.61 L1768.0,1215.20 L1770.0,1214.76 L1772.0,1214.28 L1774.0,1213.75 L1776.0,1213.17 L1778.0,1212.52 L1780.0,1211.81 L1782.0,1211.03 L1784.0,1210.17 L1786.0,1209.25 L1788.0,1208.26 L1790.0,1207.22 L1792.0,1206.13 L1794.0,1205.00 L1796.0,1203.85 L1798.0,1202.68 L1800.0,1201.50 L1800.0,1274.5 L378.0,1274.5 Z" fill="#bae7ff" fill-opacity="0.3"/>
<line x1="378" y1="635.4" x2="396" y2="635.4" stroke="#52c41a" stroke-opacity="0.55" stroke-width="2.6" stroke-dasharray="4.3 4.8"/>
<line x1="630" y1="635.4" x2="2214" y2="635.4" stroke="#52c41a" stroke-opacity="0.55" stroke-width="2.6" stroke-dasharray="4.3 4.8"/>
<line x1="378" y1="671.4" x2="2214" y2="671.4" stroke="#52c41a" stroke-opacity="0.55" stroke-width="2.6" stroke-dasharray="4.3 4.8"/>
<line x1="378" y1="707.4" x2="2214" y2="707.4" stroke="#52c41a" stroke-opacity="0.55" stroke-width="2.6" stroke-dasharray="4.3 4.8"/>
<line x1="378" y1="743.5" x2="2214" y2="743.5" stroke="#52c41a" stroke-opacity="0.55" stroke-width="2.6" stroke-dasharray="4.3 4.8"/>
<line x1="378" y1="779.5" x2="2214" y2="779.5" stroke="#52c41a" stroke-opacity="0.55" stroke-width="2.6" stroke-dasharray="4.3 4.8"/>
<line x1="378" y1="815.5" x2="2214" y2="815.5" stroke="#52c41a" stroke-opacity="0.55" stroke-width="2.6" stroke-dasharray="4.3 4.8"/>
<line x1="378" y1="865.1" x2="396" y2="865.1" stroke="#fa541c" stroke-opacity="0.55" stroke-width="2.6" stroke-dasharray="4.3 4.8"/>
<line x1="819" y1="865.1" x2="2214" y2="865.1" stroke="#fa541c" stroke-opacity="0.55" stroke-width="2.6" stroke-dasharray="4.3 4.8"/>
<line x1="378" y1="901.2" x2="2214" y2="901.2" stroke="#fa541c" stroke-opacity="0.55" stroke-width="2.6" stroke-dasharray="4.3 4.8"/>
<line x1="378" y1="937.2" x2="2214" y2="937.2" stroke="#fa541c" stroke-opacity="0.55" stroke-width="2.6" stroke-dasharray="4.3 4.8"/>
<line x1="378" y1="972.9" x2="2214" y2="972.9" stroke="#fa541c" stroke-opacity="0.55" stroke-width="2.6" stroke-dasharray="4.3 4.8"/>
<line x1="378" y1="1009.3" x2="2214" y2="1009.3" stroke="#fa541c" stroke-opacity="0.55" stroke-width="2.6" stroke-dasharray="4.3 4.8"/>
<line x1="378" y1="1045.3" x2="2214" y2="1045.3" stroke="#fa541c" stroke-opacity="0.55" stroke-width="2.6" stroke-dasharray="4.3 4.8"/>
<line x1="378" y1="1094" x2="396" y2="1094" stroke="#a9c7d8" stroke-opacity="0.55" stroke-width="2.6" stroke-dasharray="4.3 4.8"/>
<line x1="564" y1="1094" x2="2214" y2="1094" stroke="#a9c7d8" stroke-opacity="0.55" stroke-width="2.6" stroke-dasharray="4.3 4.8"/>
<line x1="378" y1="1130" x2="2214" y2="1130" stroke="#a9c7d8" stroke-opacity="0.55" stroke-width="2.6" stroke-dasharray="4.3 4.8"/>
<line x1="378" y1="1166.4" x2="2214" y2="1166.4" stroke="#a9c7d8" stroke-opacity="0.55" stroke-width="2.6" stroke-dasharray="4.3 4.8"/>
<line x1="378" y1="1202.4" x2="2214" y2="1202.4" stroke="#a9c7d8" stroke-opacity="0.55" stroke-width="2.6" stroke-dasharray="4.3 4.8"/>
<line x1="378" y1="1238.4" x2="2214" y2="1238.4" stroke="#a9c7d8" stroke-opacity="0.55" stroke-width="2.6" stroke-dasharray="4.3 4.8"/>
<line x1="378" y1="1274.5" x2="2214" y2="1274.5" stroke="#a9c7d8" stroke-opacity="0.55" stroke-width="2.6" stroke-dasharray="4.3 4.8"/>
<clipPath id="hrabove"><path d="M378.0,724.10 L380.0,723.83 L382.0,723.56 L384.0,723.28 L386.0,723.00 L388.0,722.72 L390.0,722.44 L392.0,722.15 L394.0,721.86 L396.0,721.56 L398.0,721.26 L400.0,720.96 L402.0,720.66 L404.0,720.35 L406.0,720.04 L408.0,719.73 L410.0,719.42 L412.0,719.11 L414.0,718.80 L416.0,718.49 L418.0,718.18 L420.0,717.86 L422.0,717.56 L424.0,717.25 L426.0,716.94 L428.0,716.64 L430.0,716.33 L432.0,716.03 L434.0,715.74 L436.0,715.45 L438.0,715.16 L440.0,714.87 L442.0,714.59 L444.0,714.32 L446.0,714.05 L448.0,713.78 L450.0,713.53 L452.0,713.27 L454.0,713.03 L456.0,712.79 L458.0,712.56 L460.0,712.34 L462.0,712.12 L464.0,711.91 L466.0,711.72 L468.0,711.53 L470.0,711.35 L472.0,711.18 L474.0,711.02 L476.0,710.87 L478.0,710.73 L480.0,710.60 L482.0,710.48 L484.0,710.37 L486.0,710.27 L488.0,710.18 L490.0,710.10 L492.0,710.03 L494.0,709.96 L496.0,709.91 L498.0,709.87 L500.0,709.84 L502.0,709.83 L504.0,709.84 L506.0,709.86 L508.0,709.91 L510.0,709.97 L512.0,710.05 L514.0,710.15 L516.0,710.26 L518.0,710.38 L520.0,710.51 L522.0,710.65 L524.0,710.80 L526.0,710.96 L528.0,711.13 L530.0,711.30 L532.0,711.49 L534.0,711.68 L536.0,711.89 L538.0,712.10 L540.0,712.32 L542.0,712.55 L544.0,712.79 L546.0,713.03 L548.0,713.28 L550.0,713.54 L552.0,713.81 L554.0,714.08 L556.0,714.36 L558.0,714.64 L560.0,714.93 L562.0,715.22 L564.0,715.52 L566.0,715.82 L568.0,716.13 L570.0,716.44 L572.0,716.75 L574.0,717.06 L576.0,717.38 L578.0,717.69 L580.0,718.01 L582.0,718.33 L584.0,718.65 L586.0,718.98 L588.0,719.30 L590.0,719.62 L592.0,719.94 L594.0,720.25 L596.0,720.57 L598.0,720.89 L600.0,721.20 L602.0,721.51 L604.0,721.82 L606.0,722.12 L608.0,722.42 L610.0,722.72 L612.0,723.01 L614.0,723.29 L616.0,723.58 L618.0,723.85 L620.0,724.12 L622.0,724.39 L624.0,724.64 L626.0,724.89 L628.0,725.14 L630.0,725.37 L632.0,725.60 L634.0,725.82 L636.0,726.04 L638.0,726.25 L640.0,726.46 L642.0,726.67 L644.0,726.87 L646.0,727.07 L648.0,727.28 L650.0,727.48 L652.0,727.69 L654.0,727.89 L656.0,728.09 L658.0,728.29 L660.0,728.48 L662.0,728.66 L664.0,728.84 L666.0,729.01 L668.0,729.17 L670.0,729.31 L672.0,729.45 L674.0,729.56 L676.0,729.66 L678.0,729.74 L680.0,729.81 L682.0,729.86 L684.0,729.88 L686.0,729.89 L688.0,729.89 L690.0,729.87 L692.0,729.83 L694.0,729.78 L696.0,729.71 L698.0,729.63 L700.0,729.54 L702.0,729.44 L704.0,729.32 L706.0,729.19 L708.0,729.05 L710.0,728.89 L712.0,728.73 L714.0,728.54 L716.0,728.34 L718.0,728.12 L720.0,727.89 L722.0,727.64 L724.0,727.37 L726.0,727.08 L728.0,726.78 L730.0,726.46 L732.0,726.13 L734.0,725.78 L736.0,725.42 L738.0,725.05 L740.0,724.67 L742.0,724.27 L744.0,723.87 L746.0,723.46 L748.0,723.04 L750.0,722.61 L752.0,722.17 L754.0,721.73 L756.0,721.28 L758.0,720.83 L760.0,720.38 L762.0,719.93 L764.0,719.47 L766.0,719.01 L768.0,718.55 L770.0,718.10 L772.0,717.64 L774.0,717.19 L776.0,716.74 L778.0,716.29 L780.0,715.85 L782.0,715.42 L784.0,714.99 L786.0,714.56 L788.0,714.14 L790.0,713.73 L792.0,713.32 L794.0,712.91 L796.0,712.51 L798.0,712.10 L800.0,711.70 L802.0,711.29 L804.0,710.89 L806.0,710.48 L808.0,710.07 L810.0,709.67 L812.0,709.26 L814.0,708.85 L816.0,708.44 L818.0,708.03 L820.0,707.62 L822.0,707.21 L824.0,706.80 L826.0,706.39 L828.0,705.98 L830.0,705.57 L832.0,705.16 L834.0,704.75 L836.0,704.35 L838.0,703.94 L840.0,703.54 L842.0,703.14 L844.0,702.74 L846.0,702.34 L848.0,701.94 L850.0,701.55 L852.0,701.16 L854.0,700.77 L856.0,700.38 L858.0,700.00 L860.0,699.62 L862.0,699.24 L864.0,698.86 L866.0,698.48 L868.0,698.10 L870.0,697.72 L872.0,697.34 L874.0,696.96 L876.0,696.57 L878.0,696.19 L880.0,695.80 L882.0,695.41 L884.0,695.03 L886.0,694.64 L888.0,694.26 L890.0,693.87 L892.0,693.50 L894.0,693.12 L896.0,692.75 L898.0,692.38 L900.0,692.02 L902.0,691.67 L904.0,691.32 L906.0,690.99 L908.0,690.66 L910.0,690.33 L912.0,690.02 L914.0,689.72 L916.0,689.44 L918.0,689.16 L920.0,688.89 L922.0,688.64 L924.0,688.39 L926.0,688.16 L928.0,687.94 L930.0,687.72 L932.0,687.52 L934.0,687.32 L936.0,687.14 L938.0,686.97 L940.0,686.81 L942.0,686.66 L944.0,686.54 L946.0,686.44 L948.0,686.35 L950.0,686.29 L952.0,686.26 L954.0,686.25 L956.0,686.26 L958.0,686.29 L960.0,686.34 L962.0,686.41 L964.0,686.49 L966.0,686.59 L968.0,686.70 L970.0,686.82 L972.0,686.95 L974.0,687.09 L976.0,687.23 L978.0,687.38 L980.0,687.54 L982.0,687.70 L984.0,687.86 L986.0,688.04 L988.0,688.22 L990.0,688.40 L992.0,688.59 L994.0,688.80 L996.0,689.01 L998.0,689.23 L1000.0,689.46 L1002.0,689.70 L1004.0,689.94 L1006.0,690.20 L1008.0,690.46 L1010.0,690.74 L1012.0,691.01 L1014.0,691.30 L1016.0,691.59 L1018.0,691.89 L1020.0,692.20 L1022.0,692.51 L1024.0,692.83 L1026.0,693.16 L1028.0,693.49 L1030.0,693.82 L1032.0,694.16 L1034.0,694.50 L1036.0,694.85 L1038.0,695.20 L1040.0,695.55 L1042.0,695.91 L1044.0,696.26 L1046.0,696.63 L1048.0,696.99 L1050.0,697.35 L1052.0,697.72 L1054.0,698.09 L1056.0,698.46 L1058.0,698.82 L1060.0,699.19 L1062.0,699.56 L1064.0,699.93 L1066.0,700.30 L1068.0,700.66 L1070.0,701.03 L1072.0,701.39 L1074.0,701.75 L1076.0,702.11 L1078.0,702.47 L1080.0,702.82 L1082.0,703.17 L1084.0,703.52 L1086.0,703.86 L1088.0,704.20 L1090.0,704.54 L1092.0,704.87 L1094.0,705.20 L1096.0,705.52 L1098.0,705.84 L1100.0,706.15 L1102.0,706.47 L1104.0,706.78 L1106.0,707.09 L1108.0,707.40 L1110.0,707.70 L1112.0,708.01 L1114.0,708.32 L1116.0,708.62 L1118.0,708.92 L1120.0,709.23 L1122.0,709.53 L1124.0,709.83 L1126.0,710.13 L1128.0,710.44 L1130.0,710.74 L1132.0,711.04 L1134.0,711.34 L1136.0,711.64 L1138.0,711.94 L1140.0,712.24 L1142.0,712.53 L1144.0,712.83 L1146.0,713.13 L1148.0,713.43 L1150.0,713.73 L1152.0,714.02 L1154.0,714.32 L1156.0,714.62 L1158.0,714.91 L1160.0,715.21 L1162.0,715.50 L1164.0,715.80 L1166.0,716.10 L1168.0,716.39 L1170.0,716.69 L1172.0,716.98 L1174.0,717.28 L1176.0,717.57 L1178.0,717.87 L1180.0,718.16 L1182.0,718.46 L1184.0,718.75 L1186.0,719.05 L1188.0,719.34 L1190.0,719.64 L1192.0,719.93 L1194.0,720.23 L1196.0,720.53 L1198.0,720.82 L1200.0,721.12 L1202.0,721.41 L1204.0,721.71 L1206.0,722.01 L1208.0,722.30 L1210.0,722.60 L1212.0,722.90 L1214.0,723.19 L1216.0,723.49 L1218.0,723.79 L1220.0,724.09 L1222.0,724.38 L1224.0,724.68 L1226.0,724.98 L1228.0,725.28 L1230.0,725.58 L1232.0,725.88 L1234.0,726.18 L1236.0,726.48 L1238.0,726.79 L1240.0,727.09 L1242.0,727.39 L1244.0,727.69 L1246.0,728.00 L1248.0,728.30 L1250.0,728.61 L1252.0,728.92 L1254.0,729.22 L1256.0,729.53 L1258.0,729.84 L1260.0,730.16 L1262.0,730.47 L1264.0,730.79 L1266.0,731.10 L1268.0,731.42 L1270.0,731.74 L1272.0,732.06 L1274.0,732.39 L1276.0,732.71 L1278.0,733.04 L1280.0,733.36 L1282.0,733.69 L1284.0,734.02 L1286.0,734.35 L1288.0,734.68 L1290.0,735.01 L1292.0,735.34 L1294.0,735.67 L1296.0,736.01 L1298.0,736.34 L1300.0,736.68 L1302.0,737.01 L1304.0,737.34 L1306.0,737.68 L1308.0,738.01 L1310.0,738.35 L1312.0,738.68 L1314.0,739.02 L1316.0,739.35 L1318.0,739.69 L1320.0,740.02 L1322.0,740.35 L1324.0,740.69 L1326.0,741.02 L1328.0,741.35 L1330.0,741.68 L1332.0,742.01 L1334.0,742.34 L1336.0,742.67 L1338.0,742.99 L1340.0,743.32 L1342.0,743.65 L1344.0,743.97 L1346.0,744.29 L1348.0,744.61 L1350.0,744.93 L1352.0,745.25 L1354.0,745.56 L1356.0,745.88 L1358.0,746.19 L1360.0,746.50 L1362.0,746.81 L1364.0,747.12 L1366.0,747.42 L1368.0,747.72 L1370.0,748.02 L1372.0,748.32 L1374.0,748.61 L1376.0,748.91 L1378.0,749.20 L1380.0,749.48 L1382.0,749.77 L1384.0,750.05 L1386.0,750.33 L1388.0,750.60 L1390.0,750.88 L1392.0,751.15 L1394.0,751.41 L1396.0,751.68 L1398.0,751.94 L1400.0,752.20 L1402.0,752.46 L1404.0,752.72 L1406.0,752.98 L1408.0,753.25 L1410.0,753.51 L1412.0,753.78 L1414.0,754.06 L1416.0,754.34 L1418.0,754.62 L1420.0,754.91 L1422.0,755.19 L1424.0,755.48 L1426.0,755.76 L1428.0,756.03 L1430.0,756.30 L1432.0,756.56 L1434.0,756.81 L1436.0,757.05 L1438.0,757.27 L1440.0,757.48 L1442.0,757.67 L1444.0,757.84 L1446.0,757.98 L1448.0,758.11 L1450.0,758.21 L1452.0,758.29 L1454.0,758.35 L1456.0,758.40 L1458.0,758.42 L1460.0,758.44 L1462.0,758.44 L1464.0,758.43 L1466.0,758.42 L1468.0,758.40 L1470.0,758.37 L1472.0,758.35 L1474.0,758.32 L1476.0,758.28 L1478.0,758.25 L1480.0,758.21 L1482.0,758.17 L1484.0,758.13 L1486.0,758.09 L1488.0,758.05 L1490.0,758.01 L1492.0,757.97 L1494.0,757.93 L1496.0,757.88 L1498.0,757.84 L1500.0,757.80 L1502.0,757.75 L1504.0,757.71 L1506.0,757.66 L1508.0,757.62 L1510.0,757.57 L1512.0,757.52 L1514.0,757.47 L1516.0,757.42 L1518.0,757.36 L1520.0,757.31 L1522.0,757.25 L1524.0,757.19 L1526.0,757.13 L1528.0,757.07 L1530.0,757.01 L1532.0,756.95 L1534.0,756.88 L1536.0,756.82 L1538.0,756.75 L1540.0,756.68 L1542.0,756.61 L1544.0,756.54 L1546.0,756.47 L1548.0,756.40 L1550.0,756.33 L1552.0,756.26 L1554.0,756.19 L1556.0,756.11 L1558.0,756.04 L1560.0,755.96 L1562.0,755.89 L1564.0,755.81 L1566.0,755.74 L1568.0,755.66 L1570.0,755.58 L1572.0,755.51 L1574.0,755.43 L1576.0,755.35 L1578.0,755.28 L1580.0,755.20 L1582.0,755.12 L1584.0,755.05 L1586.0,754.97 L1588.0,754.89 L1590.0,754.82 L1592.0,754.74 L1594.0,754.67 L1596.0,754.59 L1598.0,754.52 L1600.0,754.44 L1602.0,754.37 L1604.0,754.29 L1606.0,754.22 L1608.0,754.15 L1610.0,754.08 L1612.0,754.01 L1614.0,753.94 L1616.0,753.87 L1618.0,753.80 L1620.0,753.74 L1622.0,753.67 L1624.0,753.60 L1626.0,753.54 L1628.0,753.48 L1630.0,753.42 L1632.0,753.36 L1634.0,753.30 L1636.0,753.24 L1638.0,753.18 L1640.0,753.13 L1642.0,753.08 L1644.0,753.02 L1646.0,752.97 L1648.0,752.92 L1650.0,752.87 L1652.0,752.82 L1654.0,752.78 L1656.0,752.73 L1658.0,752.68 L1660.0,752.64 L1662.0,752.59 L1664.0,752.55 L1666.0,752.51 L1668.0,752.47 L1670.0,752.43 L1672.0,752.38 L1674.0,752.34 L1676.0,752.30 L1678.0,752.27 L1680.0,752.23 L1682.0,752.19 L1684.0,752.15 L1686.0,752.12 L1688.0,752.08 L1690.0,752.04 L1692.0,752.01 L1694.0,751.97 L1696.0,751.94 L1698.0,751.91 L1700.0,751.87 L1702.0,751.84 L1704.0,751.81 L1706.0,751.78 L1708.0,751.74 L1710.0,751.71 L1712.0,751.68 L1714.0,751.65 L1716.0,751.62 L1718.0,751.59 L1720.0,751.56 L1722.0,751.53 L1724.0,751.50 L1726.0,751.47 L1728.0,751.44 L1730.0,751.41 L1732.0,751.38 L1734.0,751.35 L1736.0,751.32 L1738.0,751.29 L1740.0,751.27 L1742.0,751.24 L1744.0,751.21 L1746.0,751.18 L1748.0,751.15 L1750.0,751.12 L1752.0,751.09 L1754.0,751.07 L1756.0,751.04 L1758.0,751.01 L1760.0,750.98 L1762.0,750.95 L1764.0,750.92 L1766.0,750.89 L1768.0,750.86 L1770.0,750.83 L1772.0,750.80 L1774.0,750.77 L1776.0,750.74 L1778.0,750.71 L1780.0,750.68 L1782.0,750.65 L1784.0,750.62 L1786.0,750.59 L1788.0,750.56 L1790.0,750.52 L1792.0,750.49 L1794.0,750.46 L1796.0,750.43 L1797.5,750.40 L1797.5,560 L378,560 Z"/></clipPath>
<path d="M378.0,724.10 L380.0,723.83 L382.0,723.56 L384.0,723.28 L386.0,723.00 L388.0,722.72 L390.0,722.44 L392.0,722.15 L394.0,721.86 L396.0,721.56 L398.0,721.26 L400.0,720.96 L402.0,720.66 L404.0,720.35 L406.0,720.04 L408.0,719.73 L410.0,719.42 L412.0,719.11 L414.0,718.80 L416.0,718.49 L418.0,718.18 L420.0,717.86 L422.0,717.56 L424.0,717.25 L426.0,716.94 L428.0,716.64 L430.0,716.33 L432.0,716.03 L434.0,715.74 L436.0,715.45 L438.0,715.16 L440.0,714.87 L442.0,714.59 L444.0,714.32 L446.0,714.05 L448.0,713.78 L450.0,713.53 L452.0,713.27 L454.0,713.03 L456.0,712.79 L458.0,712.56 L460.0,712.34 L462.0,712.12 L464.0,711.91 L466.0,711.72 L468.0,711.53 L470.0,711.35 L472.0,711.18 L474.0,711.02 L476.0,710.87 L478.0,710.73 L480.0,710.60 L482.0,710.48 L484.0,710.37 L486.0,710.27 L488.0,710.18 L490.0,710.10 L492.0,710.03 L494.0,709.96 L496.0,709.91 L498.0,709.87 L500.0,709.84 L502.0,709.83 L504.0,709.84 L506.0,709.86 L508.0,709.91 L510.0,709.97 L512.0,710.05 L514.0,710.15 L516.0,710.26 L518.0,710.38 L520.0,710.51 L522.0,710.65 L524.0,710.80 L526.0,710.96 L528.0,711.13 L530.0,711.30 L532.0,711.49 L534.0,711.68 L536.0,711.89 L538.0,712.10 L540.0,712.32 L542.0,712.55 L544.0,712.79 L546.0,713.03 L548.0,713.28 L550.0,713.54 L552.0,713.81 L554.0,714.08 L556.0,714.36 L558.0,714.64 L560.0,714.93 L562.0,715.22 L564.0,715.52 L566.0,715.82 L568.0,716.13 L570.0,716.44 L572.0,716.75 L574.0,717.06 L576.0,717.38 L578.0,717.69 L580.0,718.01 L582.0,718.33 L584.0,718.65 L586.0,718.98 L588.0,719.30 L590.0,719.62 L592.0,719.94 L594.0,720.25 L596.0,720.57 L598.0,720.89 L600.0,721.20 L602.0,721.51 L604.0,721.82 L606.0,722.12 L608.0,722.42 L610.0,722.72 L612.0,723.01 L614.0,723.29 L616.0,723.58 L618.0,723.85 L620.0,724.12 L622.0,724.39 L624.0,724.64 L626.0,724.89 L628.0,725.14 L630.0,725.37 L632.0,725.60 L634.0,725.82 L636.0,726.04 L638.0,726.25 L640.0,726.46 L642.0,726.67 L644.0,726.87 L646.0,727.07 L648.0,727.28 L650.0,727.48 L652.0,727.69 L654.0,727.89 L656.0,728.09 L658.0,728.29 L660.0,728.48 L662.0,728.66 L664.0,728.84 L666.0,729.01 L668.0,729.17 L670.0,729.31 L672.0,729.45 L674.0,729.56 L676.0,729.66 L678.0,729.74 L680.0,729.81 L682.0,729.86 L684.0,729.88 L686.0,729.89 L688.0,729.89 L690.0,729.87 L692.0,729.83 L694.0,729.78 L696.0,729.71 L698.0,729.63 L700.0,729.54 L702.0,729.44 L704.0,729.32 L706.0,729.19 L708.0,729.05 L710.0,728.89 L712.0,728.73 L714.0,728.54 L716.0,728.34 L718.0,728.12 L720.0,727.89 L722.0,727.64 L724.0,727.37 L726.0,727.08 L728.0,726.78 L730.0,726.46 L732.0,726.13 L734.0,725.78 L736.0,725.42 L738.0,725.05 L740.0,724.67 L742.0,724.27 L744.0,723.87 L746.0,723.46 L748.0,723.04 L750.0,722.61 L752.0,722.17 L754.0,721.73 L756.0,721.28 L758.0,720.83 L760.0,720.38 L762.0,719.93 L764.0,719.47 L766.0,719.01 L768.0,718.55 L770.0,718.10 L772.0,717.64 L774.0,717.19 L776.0,716.74 L778.0,716.29 L780.0,715.85 L782.0,715.42 L784.0,714.99 L786.0,714.56 L788.0,714.14 L790.0,713.73 L792.0,713.32 L794.0,712.91 L796.0,712.51 L798.0,712.10 L800.0,711.70 L802.0,711.29 L804.0,710.89 L806.0,710.48 L808.0,710.07 L810.0,709.67 L812.0,709.26 L814.0,708.85 L816.0,708.44 L818.0,708.03 L820.0,707.62 L822.0,707.21 L824.0,706.80 L826.0,706.39 L828.0,705.98 L830.0,705.57 L832.0,705.16 L834.0,704.75 L836.0,704.35 L838.0,703.94 L840.0,703.54 L842.0,703.14 L844.0,702.74 L846.0,702.34 L848.0,701.94 L850.0,701.55 L852.0,701.16 L854.0,700.77 L856.0,700.38 L858.0,700.00 L860.0,699.62 L862.0,699.24 L864.0,698.86 L866.0,698.48 L868.0,698.10 L870.0,697.72 L872.0,697.34 L874.0,696.96 L876.0,696.57 L878.0,696.19 L880.0,695.80 L882.0,695.41 L884.0,695.03 L886.0,694.64 L888.0,694.26 L890.0,693.87 L892.0,693.50 L894.0,693.12 L896.0,692.75 L898.0,692.38 L900.0,692.02 L902.0,691.67 L904.0,691.32 L906.0,690.99 L908.0,690.66 L910.0,690.33 L912.0,690.02 L914.0,689.72 L916.0,689.44 L918.0,689.16 L920.0,688.89 L922.0,688.64 L924.0,688.39 L926.0,688.16 L928.0,687.94 L930.0,687.72 L932.0,687.52 L934.0,687.32 L936.0,687.14 L938.0,686.97 L940.0,686.81 L942.0,686.66 L944.0,686.54 L946.0,686.44 L948.0,686.35 L950.0,686.29 L952.0,686.26 L954.0,686.25 L956.0,686.26 L958.0,686.29 L960.0,686.34 L962.0,686.41 L964.0,686.49 L966.0,686.59 L968.0,686.70 L970.0,686.82 L972.0,686.95 L974.0,687.09 L976.0,687.23 L978.0,687.38 L980.0,687.54 L982.0,687.70 L984.0,687.86 L986.0,688.04 L988.0,688.22 L990.0,688.40 L992.0,688.59 L994.0,688.80 L996.0,689.01 L998.0,689.23 L1000.0,689.46 L1002.0,689.70 L1004.0,689.94 L1006.0,690.20 L1008.0,690.46 L1010.0,690.74 L1012.0,691.01 L1014.0,691.30 L1016.0,691.59 L1018.0,691.89 L1020.0,692.20 L1022.0,692.51 L1024.0,692.83 L1026.0,693.16 L1028.0,693.49 L1030.0,693.82 L1032.0,694.16 L1034.0,694.50 L1036.0,694.85 L1038.0,695.20 L1040.0,695.55 L1042.0,695.91 L1044.0,696.26 L1046.0,696.63 L1048.0,696.99 L1050.0,697.35 L1052.0,697.72 L1054.0,698.09 L1056.0,698.46 L1058.0,698.82 L1060.0,699.19 L1062.0,699.56 L1064.0,699.93 L1066.0,700.30 L1068.0,700.66 L1070.0,701.03 L1072.0,701.39 L1074.0,701.75 L1076.0,702.11 L1078.0,702.47 L1080.0,702.82 L1082.0,703.17 L1084.0,703.52 L1086.0,703.86 L1088.0,704.20 L1090.0,704.54 L1092.0,704.87 L1094.0,705.20 L1096.0,705.52 L1098.0,705.84 L1100.0,706.15 L1102.0,706.47 L1104.0,706.78 L1106.0,707.09 L1108.0,707.40 L1110.0,707.70 L1112.0,708.01 L1114.0,708.32 L1116.0,708.62 L1118.0,708.92 L1120.0,709.23 L1122.0,709.53 L1124.0,709.83 L1126.0,710.13 L1128.0,710.44 L1130.0,710.74 L1132.0,711.04 L1134.0,711.34 L1136.0,711.64 L1138.0,711.94 L1140.0,712.24 L1142.0,712.53 L1144.0,712.83 L1146.0,713.13 L1148.0,713.43 L1150.0,713.73 L1152.0,714.02 L1154.0,714.32 L1156.0,714.62 L1158.0,714.91 L1160.0,715.21 L1162.0,715.50 L1164.0,715.80 L1166.0,716.10 L1168.0,716.39 L1170.0,716.69 L1172.0,716.98 L1174.0,717.28 L1176.0,717.57 L1178.0,717.87 L1180.0,718.16 L1182.0,718.46 L1184.0,718.75 L1186.0,719.05 L1188.0,719.34 L1190.0,719.64 L1192.0,719.93 L1194.0,720.23 L1196.0,720.53 L1198.0,720.82 L1200.0,721.12 L1202.0,721.41 L1204.0,721.71 L1206.0,722.01 L1208.0,722.30 L1210.0,722.60 L1212.0,722.90 L1214.0,723.19 L1216.0,723.49 L1218.0,723.79 L1220.0,724.09 L1222.0,724.38 L1224.0,724.68 L1226.0,724.98 L1228.0,725.28 L1230.0,725.58 L1232.0,725.88 L1234.0,726.18 L1236.0,726.48 L1238.0,726.79 L1240.0,727.09 L1242.0,727.39 L1244.0,727.69 L1246.0,728.00 L1248.0,728.30 L1250.0,728.61 L1252.0,728.92 L1254.0,729.22 L1256.0,729.53 L1258.0,729.84 L1260.0,730.16 L1262.0,730.47 L1264.0,730.79 L1266.0,731.10 L1268.0,731.42 L1270.0,731.74 L1272.0,732.06 L1274.0,732.39 L1276.0,732.71 L1278.0,733.04 L1280.0,733.36 L1282.0,733.69 L1284.0,734.02 L1286.0,734.35 L1288.0,734.68 L1290.0,735.01 L1292.0,735.34 L1294.0,735.67 L1296.0,736.01 L1298.0,736.34 L1300.0,736.68 L1302.0,737.01 L1304.0,737.34 L1306.0,737.68 L1308.0,738.01 L1310.0,738.35 L1312.0,738.68 L1314.0,739.02 L1316.0,739.35 L1318.0,739.69 L1320.0,740.02 L1322.0,740.35 L1324.0,740.69 L1326.0,741.02 L1328.0,741.35 L1330.0,741.68 L1332.0,742.01 L1334.0,742.34 L1336.0,742.67 L1338.0,742.99 L1340.0,743.32 L1342.0,743.65 L1344.0,743.97 L1346.0,744.29 L1348.0,744.61 L1350.0,744.93 L1352.0,745.25 L1354.0,745.56 L1356.0,745.88 L1358.0,746.19 L1360.0,746.50 L1362.0,746.81 L1364.0,747.12 L1366.0,747.42 L1368.0,747.72 L1370.0,748.02 L1372.0,748.32 L1374.0,748.61 L1376.0,748.91 L1378.0,749.20 L1380.0,749.48 L1382.0,749.77 L1384.0,750.05 L1386.0,750.33 L1388.0,750.60 L1390.0,750.88 L1392.0,751.15 L1394.0,751.41 L1396.0,751.68 L1398.0,751.94 L1400.0,752.20 L1402.0,752.46 L1404.0,752.72 L1406.0,752.98 L1408.0,753.25 L1410.0,753.51 L1412.0,753.78 L1414.0,754.06 L1416.0,754.34 L1418.0,754.62 L1420.0,754.91 L1422.0,755.19 L1424.0,755.48 L1426.0,755.76 L1428.0,756.03 L1430.0,756.30 L1432.0,756.56 L1434.0,756.81 L1436.0,757.05 L1438.0,757.27 L1440.0,757.48 L1442.0,757.67 L1444.0,757.84 L1446.0,757.98 L1448.0,758.11 L1450.0,758.21 L1452.0,758.29 L1454.0,758.35 L1456.0,758.40 L1458.0,758.42 L1460.0,758.44 L1462.0,758.44 L1464.0,758.43 L1466.0,758.42 L1468.0,758.40 L1470.0,758.37 L1472.0,758.35 L1474.0,758.32 L1476.0,758.28 L1478.0,758.25 L1480.0,758.21 L1482.0,758.17 L1484.0,758.13 L1486.0,758.09 L1488.0,758.05 L1490.0,758.01 L1492.0,757.97 L1494.0,757.93 L1496.0,757.88 L1498.0,757.84 L1500.0,757.80 L1502.0,757.75 L1504.0,757.71 L1506.0,757.66 L1508.0,757.62 L1510.0,757.57 L1512.0,757.52 L1514.0,757.47 L1516.0,757.42 L1518.0,757.36 L1520.0,757.31 L1522.0,757.25 L1524.0,757.19 L1526.0,757.13 L1528.0,757.07 L1530.0,757.01 L1532.0,756.95 L1534.0,756.88 L1536.0,756.82 L1538.0,756.75 L1540.0,756.68 L1542.0,756.61 L1544.0,756.54 L1546.0,756.47 L1548.0,756.40 L1550.0,756.33 L1552.0,756.26 L1554.0,756.19 L1556.0,756.11 L1558.0,756.04 L1560.0,755.96 L1562.0,755.89 L1564.0,755.81 L1566.0,755.74 L1568.0,755.66 L1570.0,755.58 L1572.0,755.51 L1574.0,755.43 L1576.0,755.35 L1578.0,755.28 L1580.0,755.20 L1582.0,755.12 L1584.0,755.05 L1586.0,754.97 L1588.0,754.89 L1590.0,754.82 L1592.0,754.74 L1594.0,754.67 L1596.0,754.59 L1598.0,754.52 L1600.0,754.44 L1602.0,754.37 L1604.0,754.29 L1606.0,754.22 L1608.0,754.15 L1610.0,754.08 L1612.0,754.01 L1614.0,753.94 L1616.0,753.87 L1618.0,753.80 L1620.0,753.74 L1622.0,753.67 L1624.0,753.60 L1626.0,753.54 L1628.0,753.48 L1630.0,753.42 L1632.0,753.36 L1634.0,753.30 L1636.0,753.24 L1638.0,753.18 L1640.0,753.13 L1642.0,753.08 L1644.0,753.02 L1646.0,752.97 L1648.0,752.92 L1650.0,752.87 L1652.0,752.82 L1654.0,752.78 L1656.0,752.73 L1658.0,752.68 L1660.0,752.64 L1662.0,752.59 L1664.0,752.55 L1666.0,752.51 L1668.0,752.47 L1670.0,752.43 L1672.0,752.38 L1674.0,752.34 L1676.0,752.30 L1678.0,752.27 L1680.0,752.23 L1682.0,752.19 L1684.0,752.15 L1686.0,752.12 L1688.0,752.08 L1690.0,752.04 L1692.0,752.01 L1694.0,751.97 L1696.0,751.94 L1698.0,751.91 L1700.0,751.87 L1702.0,751.84 L1704.0,751.81 L1706.0,751.78 L1708.0,751.74 L1710.0,751.71 L1712.0,751.68 L1714.0,751.65 L1716.0,751.62 L1718.0,751.59 L1720.0,751.56 L1722.0,751.53 L1724.0,751.50 L1726.0,751.47 L1728.0,751.44 L1730.0,751.41 L1732.0,751.38 L1734.0,751.35 L1736.0,751.32 L1738.0,751.29 L1740.0,751.27 L1742.0,751.24 L1744.0,751.21 L1746.0,751.18 L1748.0,751.15 L1750.0,751.12 L1752.0,751.09 L1754.0,751.07 L1756.0,751.04 L1758.0,751.01 L1760.0,750.98 L1762.0,750.95 L1764.0,750.92 L1766.0,750.89 L1768.0,750.86 L1770.0,750.83 L1772.0,750.80 L1774.0,750.77 L1776.0,750.74 L1778.0,750.71 L1780.0,750.68 L1782.0,750.65 L1784.0,750.62 L1786.0,750.59 L1788.0,750.56 L1790.0,750.52 L1792.0,750.49 L1794.0,750.46 L1796.0,750.43 L1797.5,750.40" fill="none" stroke="#000" stroke-width="21" clip-path="url(#hrabove)"/>
<path d="M378.0,724.10 L380.0,723.83 L382.0,723.56 L384.0,723.28 L386.0,723.00 L388.0,722.72 L390.0,722.44 L392.0,722.15 L394.0,721.86 L396.0,721.56 L398.0,721.26 L400.0,720.96 L402.0,720.66 L404.0,720.35 L406.0,720.04 L408.0,719.73 L410.0,719.42 L412.0,719.11 L414.0,718.80 L416.0,718.49 L418.0,718.18 L420.0,717.86 L422.0,717.56 L424.0,717.25 L426.0,716.94 L428.0,716.64 L430.0,716.33 L432.0,716.03 L434.0,715.74 L436.0,715.45 L438.0,715.16 L440.0,714.87 L442.0,714.59 L444.0,714.32 L446.0,714.05 L448.0,713.78 L450.0,713.53 L452.0,713.27 L454.0,713.03 L456.0,712.79 L458.0,712.56 L460.0,712.34 L462.0,712.12 L464.0,711.91 L466.0,711.72 L468.0,711.53 L470.0,711.35 L472.0,711.18 L474.0,711.02 L476.0,710.87 L478.0,710.73 L480.0,710.60 L482.0,710.48 L484.0,710.37 L486.0,710.27 L488.0,710.18 L490.0,710.10 L492.0,710.03 L494.0,709.96 L496.0,709.91 L498.0,709.87 L500.0,709.84 L502.0,709.83 L504.0,709.84 L506.0,709.86 L508.0,709.91 L510.0,709.97 L512.0,710.05 L514.0,710.15 L516.0,710.26 L518.0,710.38 L520.0,710.51 L522.0,710.65 L524.0,710.80 L526.0,710.96 L528.0,711.13 L530.0,711.30 L532.0,711.49 L534.0,711.68 L536.0,711.89 L538.0,712.10 L540.0,712.32 L542.0,712.55 L544.0,712.79 L546.0,713.03 L548.0,713.28 L550.0,713.54 L552.0,713.81 L554.0,714.08 L556.0,714.36 L558.0,714.64 L560.0,714.93 L562.0,715.22 L564.0,715.52 L566.0,715.82 L568.0,716.13 L570.0,716.44 L572.0,716.75 L574.0,717.06 L576.0,717.38 L578.0,717.69 L580.0,718.01 L582.0,718.33 L584.0,718.65 L586.0,718.98 L588.0,719.30 L590.0,719.62 L592.0,719.94 L594.0,720.25 L596.0,720.57 L598.0,720.89 L600.0,721.20 L602.0,721.51 L604.0,721.82 L606.0,722.12 L608.0,722.42 L610.0,722.72 L612.0,723.01 L614.0,723.29 L616.0,723.58 L618.0,723.85 L620.0,724.12 L622.0,724.39 L624.0,724.64 L626.0,724.89 L628.0,725.14 L630.0,725.37 L632.0,725.60 L634.0,725.82 L636.0,726.04 L638.0,726.25 L640.0,726.46 L642.0,726.67 L644.0,726.87 L646.0,727.07 L648.0,727.28 L650.0,727.48 L652.0,727.69 L654.0,727.89 L656.0,728.09 L658.0,728.29 L660.0,728.48 L662.0,728.66 L664.0,728.84 L666.0,729.01 L668.0,729.17 L670.0,729.31 L672.0,729.45 L674.0,729.56 L676.0,729.66 L678.0,729.74 L680.0,729.81 L682.0,729.86 L684.0,729.88 L686.0,729.89 L688.0,729.89 L690.0,729.87 L692.0,729.83 L694.0,729.78 L696.0,729.71 L698.0,729.63 L700.0,729.54 L702.0,729.44 L704.0,729.32 L706.0,729.19 L708.0,729.05 L710.0,728.89 L712.0,728.73 L714.0,728.54 L716.0,728.34 L718.0,728.12 L720.0,727.89 L722.0,727.64 L724.0,727.37 L726.0,727.08 L728.0,726.78 L730.0,726.46 L732.0,726.13 L734.0,725.78 L736.0,725.42 L738.0,725.05 L740.0,724.67 L742.0,724.27 L744.0,723.87 L746.0,723.46 L748.0,723.04 L750.0,722.61 L752.0,722.17 L754.0,721.73 L756.0,721.28 L758.0,720.83 L760.0,720.38 L762.0,719.93 L764.0,719.47 L766.0,719.01 L768.0,718.55 L770.0,718.10 L772.0,717.64 L774.0,717.19 L776.0,716.74 L778.0,716.29 L780.0,715.85 L782.0,715.42 L784.0,714.99 L786.0,714.56 L788.0,714.14 L790.0,713.73 L792.0,713.32 L794.0,712.91 L796.0,712.51 L798.0,712.10 L800.0,711.70 L802.0,711.29 L804.0,710.89 L806.0,710.48 L808.0,710.07 L810.0,709.67 L812.0,709.26 L814.0,708.85 L816.0,708.44 L818.0,708.03 L820.0,707.62 L822.0,707.21 L824.0,706.80 L826.0,706.39 L828.0,705.98 L830.0,705.57 L832.0,705.16 L834.0,704.75 L836.0,704.35 L838.0,703.94 L840.0,703.54 L842.0,703.14 L844.0,702.74 L846.0,702.34 L848.0,701.94 L850.0,701.55 L852.0,701.16 L854.0,700.77 L856.0,700.38 L858.0,700.00 L860.0,699.62 L862.0,699.24 L864.0,698.86 L866.0,698.48 L868.0,698.10 L870.0,697.72 L872.0,697.34 L874.0,696.96 L876.0,696.57 L878.0,696.19 L880.0,695.80 L882.0,695.41 L884.0,695.03 L886.0,694.64 L888.0,694.26 L890.0,693.87 L892.0,693.50 L894.0,693.12 L896.0,692.75 L898.0,692.38 L900.0,692.02 L902.0,691.67 L904.0,691.32 L906.0,690.99 L908.0,690.66 L910.0,690.33 L912.0,690.02 L914.0,689.72 L916.0,689.44 L918.0,689.16 L920.0,688.89 L922.0,688.64 L924.0,688.39 L926.0,688.16 L928.0,687.94 L930.0,687.72 L932.0,687.52 L934.0,687.32 L936.0,687.14 L938.0,686.97 L940.0,686.81 L942.0,686.66 L944.0,686.54 L946.0,686.44 L948.0,686.35 L950.0,686.29 L952.0,686.26 L954.0,686.25 L956.0,686.26 L958.0,686.29 L960.0,686.34 L962.0,686.41 L964.0,686.49 L966.0,686.59 L968.0,686.70 L970.0,686.82 L972.0,686.95 L974.0,687.09 L976.0,687.23 L978.0,687.38 L980.0,687.54 L982.0,687.70 L984.0,687.86 L986.0,688.04 L988.0,688.22 L990.0,688.40 L992.0,688.59 L994.0,688.80 L996.0,689.01 L998.0,689.23 L1000.0,689.46 L1002.0,689.70 L1004.0,689.94 L1006.0,690.20 L1008.0,690.46 L1010.0,690.74 L1012.0,691.01 L1014.0,691.30 L1016.0,691.59 L1018.0,691.89 L1020.0,692.20 L1022.0,692.51 L1024.0,692.83 L1026.0,693.16 L1028.0,693.49 L1030.0,693.82 L1032.0,694.16 L1034.0,694.50 L1036.0,694.85 L1038.0,695.20 L1040.0,695.55 L1042.0,695.91 L1044.0,696.26 L1046.0,696.63 L1048.0,696.99 L1050.0,697.35 L1052.0,697.72 L1054.0,698.09 L1056.0,698.46 L1058.0,698.82 L1060.0,699.19 L1062.0,699.56 L1064.0,699.93 L1066.0,700.30 L1068.0,700.66 L1070.0,701.03 L1072.0,701.39 L1074.0,701.75 L1076.0,702.11 L1078.0,702.47 L1080.0,702.82 L1082.0,703.17 L1084.0,703.52 L1086.0,703.86 L1088.0,704.20 L1090.0,704.54 L1092.0,704.87 L1094.0,705.20 L1096.0,705.52 L1098.0,705.84 L1100.0,706.15 L1102.0,706.47 L1104.0,706.78 L1106.0,707.09 L1108.0,707.40 L1110.0,707.70 L1112.0,708.01 L1114.0,708.32 L1116.0,708.62 L1118.0,708.92 L1120.0,709.23 L1122.0,709.53 L1124.0,709.83 L1126.0,710.13 L1128.0,710.44 L1130.0,710.74 L1132.0,711.04 L1134.0,711.34 L1136.0,711.64 L1138.0,711.94 L1140.0,712.24 L1142.0,712.53 L1144.0,712.83 L1146.0,713.13 L1148.0,713.43 L1150.0,713.73 L1152.0,714.02 L1154.0,714.32 L1156.0,714.62 L1158.0,714.91 L1160.0,715.21 L1162.0,715.50 L1164.0,715.80 L1166.0,716.10 L1168.0,716.39 L1170.0,716.69 L1172.0,716.98 L1174.0,717.28 L1176.0,717.57 L1178.0,717.87 L1180.0,718.16 L1182.0,718.46 L1184.0,718.75 L1186.0,719.05 L1188.0,719.34 L1190.0,719.64 L1192.0,719.93 L1194.0,720.23 L1196.0,720.53 L1198.0,720.82 L1200.0,721.12 L1202.0,721.41 L1204.0,721.71 L1206.0,722.01 L1208.0,722.30 L1210.0,722.60 L1212.0,722.90 L1214.0,723.19 L1216.0,723.49 L1218.0,723.79 L1220.0,724.09 L1222.0,724.38 L1224.0,724.68 L1226.0,724.98 L1228.0,725.28 L1230.0,725.58 L1232.0,725.88 L1234.0,726.18 L1236.0,726.48 L1238.0,726.79 L1240.0,727.09 L1242.0,727.39 L1244.0,727.69 L1246.0,728.00 L1248.0,728.30 L1250.0,728.61 L1252.0,728.92 L1254.0,729.22 L1256.0,729.53 L1258.0,729.84 L1260.0,730.16 L1262.0,730.47 L1264.0,730.79 L1266.0,731.10 L1268.0,731.42 L1270.0,731.74 L1272.0,732.06 L1274.0,732.39 L1276.0,732.71 L1278.0,733.04 L1280.0,733.36 L1282.0,733.69 L1284.0,734.02 L1286.0,734.35 L1288.0,734.68 L1290.0,735.01 L1292.0,735.34 L1294.0,735.67 L1296.0,736.01 L1298.0,736.34 L1300.0,736.68 L1302.0,737.01 L1304.0,737.34 L1306.0,737.68 L1308.0,738.01 L1310.0,738.35 L1312.0,738.68 L1314.0,739.02 L1316.0,739.35 L1318.0,739.69 L1320.0,740.02 L1322.0,740.35 L1324.0,740.69 L1326.0,741.02 L1328.0,741.35 L1330.0,741.68 L1332.0,742.01 L1334.0,742.34 L1336.0,742.67 L1338.0,742.99 L1340.0,743.32 L1342.0,743.65 L1344.0,743.97 L1346.0,744.29 L1348.0,744.61 L1350.0,744.93 L1352.0,745.25 L1354.0,745.56 L1356.0,745.88 L1358.0,746.19 L1360.0,746.50 L1362.0,746.81 L1364.0,747.12 L1366.0,747.42 L1368.0,747.72 L1370.0,748.02 L1372.0,748.32 L1374.0,748.61 L1376.0,748.91 L1378.0,749.20 L1380.0,749.48 L1382.0,749.77 L1384.0,750.05 L1386.0,750.33 L1388.0,750.60 L1390.0,750.88 L1392.0,751.15 L1394.0,751.41 L1396.0,751.68 L1398.0,751.94 L1400.0,752.20 L1402.0,752.46 L1404.0,752.72 L1406.0,752.98 L1408.0,753.25 L1410.0,753.51 L1412.0,753.78 L1414.0,754.06 L1416.0,754.34 L1418.0,754.62 L1420.0,754.91 L1422.0,755.19 L1424.0,755.48 L1426.0,755.76 L1428.0,756.03 L1430.0,756.30 L1432.0,756.56 L1434.0,756.81 L1436.0,757.05 L1438.0,757.27 L1440.0,757.48 L1442.0,757.67 L1444.0,757.84 L1446.0,757.98 L1448.0,758.11 L1450.0,758.21 L1452.0,758.29 L1454.0,758.35 L1456.0,758.40 L1458.0,758.42 L1460.0,758.44 L1462.0,758.44 L1464.0,758.43 L1466.0,758.42 L1468.0,758.40 L1470.0,758.37 L1472.0,758.35 L1474.0,758.32 L1476.0,758.28 L1478.0,758.25 L1480.0,758.21 L1482.0,758.17 L1484.0,758.13 L1486.0,758.09 L1488.0,758.05 L1490.0,758.01 L1492.0,757.97 L1494.0,757.93 L1496.0,757.88 L1498.0,757.84 L1500.0,757.80 L1502.0,757.75 L1504.0,757.71 L1506.0,757.66 L1508.0,757.62 L1510.0,757.57 L1512.0,757.52 L1514.0,757.47 L1516.0,757.42 L1518.0,757.36 L1520.0,757.31 L1522.0,757.25 L1524.0,757.19 L1526.0,757.13 L1528.0,757.07 L1530.0,757.01 L1532.0,756.95 L1534.0,756.88 L1536.0,756.82 L1538.0,756.75 L1540.0,756.68 L1542.0,756.61 L1544.0,756.54 L1546.0,756.47 L1548.0,756.40 L1550.0,756.33 L1552.0,756.26 L1554.0,756.19 L1556.0,756.11 L1558.0,756.04 L1560.0,755.96 L1562.0,755.89 L1564.0,755.81 L1566.0,755.74 L1568.0,755.66 L1570.0,755.58 L1572.0,755.51 L1574.0,755.43 L1576.0,755.35 L1578.0,755.28 L1580.0,755.20 L1582.0,755.12 L1584.0,755.05 L1586.0,754.97 L1588.0,754.89 L1590.0,754.82 L1592.0,754.74 L1594.0,754.67 L1596.0,754.59 L1598.0,754.52 L1600.0,754.44 L1602.0,754.37 L1604.0,754.29 L1606.0,754.22 L1608.0,754.15 L1610.0,754.08 L1612.0,754.01 L1614.0,753.94 L1616.0,753.87 L1618.0,753.80 L1620.0,753.74 L1622.0,753.67 L1624.0,753.60 L1626.0,753.54 L1628.0,753.48 L1630.0,753.42 L1632.0,753.36 L1634.0,753.30 L1636.0,753.24 L1638.0,753.18 L1640.0,753.13 L1642.0,753.08 L1644.0,753.02 L1646.0,752.97 L1648.0,752.92 L1650.0,752.87 L1652.0,752.82 L1654.0,752.78 L1656.0,752.73 L1658.0,752.68 L1660.0,752.64 L1662.0,752.59 L1664.0,752.55 L1666.0,752.51 L1668.0,752.47 L1670.0,752.43 L1672.0,752.38 L1674.0,752.34 L1676.0,752.30 L1678.0,752.27 L1680.0,752.23 L1682.0,752.19 L1684.0,752.15 L1686.0,752.12 L1688.0,752.08 L1690.0,752.04 L1692.0,752.01 L1694.0,751.97 L1696.0,751.94 L1698.0,751.91 L1700.0,751.87 L1702.0,751.84 L1704.0,751.81 L1706.0,751.78 L1708.0,751.74 L1710.0,751.71 L1712.0,751.68 L1714.0,751.65 L1716.0,751.62 L1718.0,751.59 L1720.0,751.56 L1722.0,751.53 L1724.0,751.50 L1726.0,751.47 L1728.0,751.44 L1730.0,751.41 L1732.0,751.38 L1734.0,751.35 L1736.0,751.32 L1738.0,751.29 L1740.0,751.27 L1742.0,751.24 L1744.0,751.21 L1746.0,751.18 L1748.0,751.15 L1750.0,751.12 L1752.0,751.09 L1754.0,751.07 L1756.0,751.04 L1758.0,751.01 L1760.0,750.98 L1762.0,750.95 L1764.0,750.92 L1766.0,750.89 L1768.0,750.86 L1770.0,750.83 L1772.0,750.80 L1774.0,750.77 L1776.0,750.74 L1778.0,750.71 L1780.0,750.68 L1782.0,750.65 L1784.0,750.62 L1786.0,750.59 L1788.0,750.56 L1790.0,750.52 L1792.0,750.49 L1794.0,750.46 L1796.0,750.43 L1797.5,750.40" fill="none" stroke="#52c41a" stroke-width="6.5"/>
<path d="M378.0,1190.80 L380.0,1191.18 L382.0,1191.57 L384.0,1191.95 L386.0,1192.33 L388.0,1192.72 L390.0,1193.11 L392.0,1193.50 L394.0,1193.89 L396.0,1194.28 L398.0,1194.67 L400.0,1195.07 L402.0,1195.46 L404.0,1195.86 L406.0,1196.26 L408.0,1196.66 L410.0,1197.05 L412.0,1197.45 L414.0,1197.85 L416.0,1198.25 L418.0,1198.65 L420.0,1199.05 L422.0,1199.44 L424.0,1199.84 L426.0,1200.24 L428.0,1200.63 L430.0,1201.03 L432.0,1201.42 L434.0,1201.82 L436.0,1202.21 L438.0,1202.60 L440.0,1202.98 L442.0,1203.37 L444.0,1203.75 L446.0,1204.13 L448.0,1204.51 L450.0,1204.89 L452.0,1205.26 L454.0,1205.64 L456.0,1206.00 L458.0,1206.37 L460.0,1206.73 L462.0,1207.09 L464.0,1207.45 L466.0,1207.80 L468.0,1208.15 L470.0,1208.49 L472.0,1208.83 L474.0,1209.17 L476.0,1209.50 L478.0,1209.83 L480.0,1210.16 L482.0,1210.48 L484.0,1210.81 L486.0,1211.13 L488.0,1211.45 L490.0,1211.78 L492.0,1212.11 L494.0,1212.44 L496.0,1212.78 L498.0,1213.12 L500.0,1213.46 L502.0,1213.80 L504.0,1214.15 L506.0,1214.49 L508.0,1214.84 L510.0,1215.18 L512.0,1215.52 L514.0,1215.85 L516.0,1216.18 L518.0,1216.50 L520.0,1216.81 L522.0,1217.11 L524.0,1217.40 L526.0,1217.68 L528.0,1217.95 L530.0,1218.20 L532.0,1218.43 L534.0,1218.65 L536.0,1218.85 L538.0,1219.02 L540.0,1219.18 L542.0,1219.32 L544.0,1219.43 L546.0,1219.53 L548.0,1219.60 L550.0,1219.64 L552.0,1219.67 L554.0,1219.67 L556.0,1219.65 L558.0,1219.61 L560.0,1219.55 L562.0,1219.47 L564.0,1219.38 L566.0,1219.26 L568.0,1219.13 L570.0,1218.98 L572.0,1218.81 L574.0,1218.63 L576.0,1218.43 L578.0,1218.21 L580.0,1217.97 L582.0,1217.71 L584.0,1217.44 L586.0,1217.15 L588.0,1216.84 L590.0,1216.51 L592.0,1216.17 L594.0,1215.81 L596.0,1215.43 L598.0,1215.03 L600.0,1214.62 L602.0,1214.18 L604.0,1213.73 L606.0,1213.26 L608.0,1212.77 L610.0,1212.26 L612.0,1211.72 L614.0,1211.16 L616.0,1210.56 L618.0,1209.92 L620.0,1209.25 L622.0,1208.53 L624.0,1207.77 L626.0,1206.98 L628.0,1206.15 L630.0,1205.30 L632.0,1204.43 L634.0,1203.55 L636.0,1202.66 L638.0,1201.78 L640.0,1200.90 L642.0,1200.03 L644.0,1199.16 L646.0,1198.30 L648.0,1197.43 L650.0,1196.57 L652.0,1195.71 L654.0,1194.84 L656.0,1193.98 L658.0,1193.11 L660.0,1192.24 L662.0,1191.37 L664.0,1190.50 L666.0,1189.64 L668.0,1188.77 L670.0,1187.91 L672.0,1187.05 L674.0,1186.20 L676.0,1185.35 L678.0,1184.51 L680.0,1183.68 L682.0,1182.86 L684.0,1182.04 L686.0,1181.24 L688.0,1180.44 L690.0,1179.66 L692.0,1178.90 L694.0,1178.14 L696.0,1177.40 L698.0,1176.68 L700.0,1175.97 L702.0,1175.28 L704.0,1174.60 L706.0,1173.95 L708.0,1173.31 L710.0,1172.70 L712.0,1172.11 L714.0,1171.54 L716.0,1170.99 L718.0,1170.47 L720.0,1169.97 L722.0,1169.50 L724.0,1169.05 L726.0,1168.62 L728.0,1168.22 L730.0,1167.84 L732.0,1167.48 L734.0,1167.14 L736.0,1166.82 L738.0,1166.51 L740.0,1166.23 L742.0,1165.96 L744.0,1165.70 L746.0,1165.46 L748.0,1165.24 L750.0,1165.03 L752.0,1164.84 L754.0,1164.66 L756.0,1164.49 L758.0,1164.35 L760.0,1164.21 L762.0,1164.09 L764.0,1163.99 L766.0,1163.90 L768.0,1163.83 L770.0,1163.78 L772.0,1163.75 L774.0,1163.73 L776.0,1163.74 L778.0,1163.76 L780.0,1163.82 L782.0,1163.90 L784.0,1164.01 L786.0,1164.14 L788.0,1164.31 L790.0,1164.50 L792.0,1164.73 L794.0,1164.98 L796.0,1165.27 L798.0,1165.58 L800.0,1165.92 L802.0,1166.29 L804.0,1166.69 L806.0,1167.12 L808.0,1167.57 L810.0,1168.05 L812.0,1168.55 L814.0,1169.08 L816.0,1169.64 L818.0,1170.22 L820.0,1170.82 L822.0,1171.45 L824.0,1172.10 L826.0,1172.77 L828.0,1173.47 L830.0,1174.19 L832.0,1174.94 L834.0,1175.71 L836.0,1176.50 L838.0,1177.33 L840.0,1178.18 L842.0,1179.07 L844.0,1179.99 L846.0,1180.95 L848.0,1181.94 L850.0,1182.97 L852.0,1184.02 L854.0,1185.10 L856.0,1186.20 L858.0,1187.32 L860.0,1188.44 L862.0,1189.57 L864.0,1190.69 L866.0,1191.80 L868.0,1192.89 L870.0,1193.96 L872.0,1195.01 L874.0,1196.02 L876.0,1197.01 L878.0,1197.96 L880.0,1198.88 L882.0,1199.78 L884.0,1200.65 L886.0,1201.49 L888.0,1202.31 L890.0,1203.11 L892.0,1203.89 L894.0,1204.65 L896.0,1205.40 L898.0,1206.12 L900.0,1206.83 L902.0,1207.51 L904.0,1208.18 L906.0,1208.83 L908.0,1209.46 L910.0,1210.08 L912.0,1210.67 L914.0,1211.25 L916.0,1211.81 L918.0,1212.35 L920.0,1212.87 L922.0,1213.37 L924.0,1213.86 L926.0,1214.32 L928.0,1214.77 L930.0,1215.20 L932.0,1215.62 L934.0,1216.01 L936.0,1216.39 L938.0,1216.75 L940.0,1217.09 L942.0,1217.41 L944.0,1217.72 L946.0,1218.01 L948.0,1218.29 L950.0,1218.55 L952.0,1218.78 L954.0,1219.00 L956.0,1219.20 L958.0,1219.37 L960.0,1219.51 L962.0,1219.62 L964.0,1219.70 L966.0,1219.75 L968.0,1219.76 L970.0,1219.73 L972.0,1219.68 L974.0,1219.59 L976.0,1219.47 L978.0,1219.34 L980.0,1219.18 L982.0,1219.01 L984.0,1218.83 L986.0,1218.63 L988.0,1218.42 L990.0,1218.21 L992.0,1217.98 L994.0,1217.74 L996.0,1217.48 L998.0,1217.22 L1000.0,1216.95 L1002.0,1216.67 L1004.0,1216.38 L1006.0,1216.08 L1008.0,1215.78 L1010.0,1215.48 L1012.0,1215.17 L1014.0,1214.87 L1016.0,1214.56 L1018.0,1214.25 L1020.0,1213.95 L1022.0,1213.65 L1024.0,1213.36 L1026.0,1213.07 L1028.0,1212.79 L1030.0,1212.51 L1032.0,1212.24 L1034.0,1211.97 L1036.0,1211.70 L1038.0,1211.44 L1040.0,1211.18 L1042.0,1210.91 L1044.0,1210.65 L1046.0,1210.38 L1048.0,1210.12 L1050.0,1209.85 L1052.0,1209.59 L1054.0,1209.33 L1056.0,1209.07 L1058.0,1208.82 L1060.0,1208.57 L1062.0,1208.33 L1064.0,1208.10 L1066.0,1207.88 L1068.0,1207.67 L1070.0,1207.48 L1072.0,1207.29 L1074.0,1207.12 L1076.0,1206.97 L1078.0,1206.84 L1080.0,1206.72 L1082.0,1206.62 L1084.0,1206.55 L1086.0,1206.49 L1088.0,1206.47 L1090.0,1206.46 L1092.0,1206.48 L1094.0,1206.53 L1096.0,1206.61 L1098.0,1206.71 L1100.0,1206.83 L1102.0,1206.98 L1104.0,1207.16 L1106.0,1207.35 L1108.0,1207.57 L1110.0,1207.81 L1112.0,1208.06 L1114.0,1208.34 L1116.0,1208.62 L1118.0,1208.92 L1120.0,1209.23 L1122.0,1209.56 L1124.0,1209.89 L1126.0,1210.23 L1128.0,1210.57 L1130.0,1210.92 L1132.0,1211.27 L1134.0,1211.63 L1136.0,1211.98 L1138.0,1212.33 L1140.0,1212.68 L1142.0,1213.03 L1144.0,1213.37 L1146.0,1213.70 L1148.0,1214.02 L1150.0,1214.34 L1152.0,1214.65 L1154.0,1214.94 L1156.0,1215.23 L1158.0,1215.52 L1160.0,1215.80 L1162.0,1216.08 L1164.0,1216.36 L1166.0,1216.63 L1168.0,1216.92 L1170.0,1217.20 L1172.0,1217.49 L1174.0,1217.78 L1176.0,1218.07 L1178.0,1218.36 L1180.0,1218.66 L1182.0,1218.96 L1184.0,1219.26 L1186.0,1219.55 L1188.0,1219.85 L1190.0,1220.14 L1192.0,1220.43 L1194.0,1220.72 L1196.0,1221.00 L1198.0,1221.28 L1200.0,1221.55 L1202.0,1221.82 L1204.0,1222.07 L1206.0,1222.32 L1208.0,1222.57 L1210.0,1222.80 L1212.0,1223.02 L1214.0,1223.23 L1216.0,1223.43 L1218.0,1223.62 L1220.0,1223.80 L1222.0,1223.96 L1224.0,1224.10 L1226.0,1224.24 L1228.0,1224.35 L1230.0,1224.45 L1232.0,1224.54 L1234.0,1224.60 L1236.0,1224.65 L1238.0,1224.68 L1240.0,1224.70 L1242.0,1224.70 L1244.0,1224.68 L1246.0,1224.64 L1248.0,1224.59 L1250.0,1224.53 L1252.0,1224.45 L1254.0,1224.36 L1256.0,1224.26 L1258.0,1224.15 L1260.0,1224.02 L1262.0,1223.88 L1264.0,1223.74 L1266.0,1223.58 L1268.0,1223.41 L1270.0,1223.23 L1272.0,1223.04 L1274.0,1222.85 L1276.0,1222.65 L1278.0,1222.44 L1280.0,1222.22 L1282.0,1222.00 L1284.0,1221.77 L1286.0,1221.53 L1288.0,1221.29 L1290.0,1221.05 L1292.0,1220.80 L1294.0,1220.54 L1296.0,1220.29 L1298.0,1220.03 L1300.0,1219.76 L1302.0,1219.50 L1304.0,1219.24 L1306.0,1218.97 L1308.0,1218.70 L1310.0,1218.44 L1312.0,1218.17 L1314.0,1217.91 L1316.0,1217.64 L1318.0,1217.38 L1320.0,1217.12 L1322.0,1216.86 L1324.0,1216.60 L1326.0,1216.35 L1328.0,1216.10 L1330.0,1215.85 L1332.0,1215.60 L1334.0,1215.35 L1336.0,1215.11 L1338.0,1214.86 L1340.0,1214.61 L1342.0,1214.35 L1344.0,1214.10 L1346.0,1213.84 L1348.0,1213.58 L1350.0,1213.31 L1352.0,1213.05 L1354.0,1212.78 L1356.0,1212.51 L1358.0,1212.24 L1360.0,1211.97 L1362.0,1211.70 L1364.0,1211.42 L1366.0,1211.15 L1368.0,1210.87 L1370.0,1210.59 L1372.0,1210.32 L1374.0,1210.04 L1376.0,1209.76 L1378.0,1209.48 L1380.0,1209.21 L1382.0,1208.93 L1384.0,1208.66 L1386.0,1208.39 L1388.0,1208.11 L1390.0,1207.84 L1392.0,1207.57 L1394.0,1207.31 L1396.0,1207.04 L1398.0,1206.78 L1400.0,1206.52 L1402.0,1206.26 L1404.0,1206.00 L1406.0,1205.75 L1408.0,1205.50 L1410.0,1205.25 L1412.0,1205.00 L1414.0,1204.75 L1416.0,1204.51 L1418.0,1204.26 L1420.0,1204.02 L1422.0,1203.78 L1424.0,1203.53 L1426.0,1203.29 L1428.0,1203.05 L1430.0,1202.82 L1432.0,1202.58 L1434.0,1202.34 L1436.0,1202.11 L1438.0,1201.87 L1440.0,1201.64 L1442.0,1201.40 L1444.0,1201.17 L1446.0,1200.94 L1448.0,1200.71 L1450.0,1200.48 L1452.0,1200.25 L1454.0,1200.02 L1456.0,1199.79 L1458.0,1199.56 L1460.0,1199.33 L1462.0,1199.10 L1464.0,1198.88 L1466.0,1198.65 L1468.0,1198.42 L1470.0,1198.20 L1472.0,1197.97 L1474.0,1197.74 L1476.0,1197.51 L1478.0,1197.28 L1480.0,1197.04 L1482.0,1196.80 L1484.0,1196.56 L1486.0,1196.30 L1488.0,1196.04 L1490.0,1195.78 L1492.0,1195.51 L1494.0,1195.23 L1496.0,1194.96 L1498.0,1194.68 L1500.0,1194.41 L1502.0,1194.15 L1504.0,1193.90 L1506.0,1193.65 L1508.0,1193.42 L1510.0,1193.20 L1512.0,1193.00 L1514.0,1192.82 L1516.0,1192.67 L1518.0,1192.54 L1520.0,1192.43 L1522.0,1192.35 L1524.0,1192.30 L1526.0,1192.28 L1528.0,1192.29 L1530.0,1192.32 L1532.0,1192.38 L1534.0,1192.46 L1536.0,1192.57 L1538.0,1192.70 L1540.0,1192.85 L1542.0,1193.01 L1544.0,1193.19 L1546.0,1193.39 L1548.0,1193.59 L1550.0,1193.81 L1552.0,1194.04 L1554.0,1194.27 L1556.0,1194.52 L1558.0,1194.78 L1560.0,1195.05 L1562.0,1195.33 L1564.0,1195.62 L1566.0,1195.93 L1568.0,1196.25 L1570.0,1196.58 L1572.0,1196.93 L1574.0,1197.29 L1576.0,1197.66 L1578.0,1198.05 L1580.0,1198.44 L1582.0,1198.84 L1584.0,1199.25 L1586.0,1199.66 L1588.0,1200.08 L1590.0,1200.50 L1592.0,1200.92 L1594.0,1201.35 L1596.0,1201.77 L1598.0,1202.20 L1600.0,1202.62 L1602.0,1203.04 L1604.0,1203.45 L1606.0,1203.86 L1608.0,1204.27 L1610.0,1204.67 L1612.0,1205.06 L1614.0,1205.45 L1616.0,1205.83 L1618.0,1206.22 L1620.0,1206.59 L1622.0,1206.97 L1624.0,1207.35 L1626.0,1207.72 L1628.0,1208.10 L1630.0,1208.48 L1632.0,1208.85 L1634.0,1209.23 L1636.0,1209.60 L1638.0,1209.97 L1640.0,1210.34 L1642.0,1210.71 L1644.0,1211.08 L1646.0,1211.44 L1648.0,1211.80 L1650.0,1212.15 L1652.0,1212.50 L1654.0,1212.84 L1656.0,1213.18 L1658.0,1213.51 L1660.0,1213.84 L1662.0,1214.16 L1664.0,1214.47 L1666.0,1214.78 L1668.0,1215.07 L1670.0,1215.37 L1672.0,1215.66 L1674.0,1215.94 L1676.0,1216.22 L1678.0,1216.50 L1680.0,1216.77 L1682.0,1217.05 L1684.0,1217.32 L1686.0,1217.59 L1688.0,1217.85 L1690.0,1218.11 L1692.0,1218.36 L1694.0,1218.60 L1696.0,1218.83 L1698.0,1219.04 L1700.0,1219.24 L1702.0,1219.43 L1704.0,1219.60 L1706.0,1219.74 L1708.0,1219.87 L1710.0,1219.98 L1712.0,1220.06 L1714.0,1220.12 L1716.0,1220.16 L1718.0,1220.18 L1720.0,1220.17 L1722.0,1220.15 L1724.0,1220.11 L1726.0,1220.05 L1728.0,1219.97 L1730.0,1219.88 L1732.0,1219.78 L1734.0,1219.65 L1736.0,1219.52 L1738.0,1219.36 L1740.0,1219.19 L1742.0,1219.01 L1744.0,1218.81 L1746.0,1218.59 L1748.0,1218.36 L1750.0,1218.12 L1752.0,1217.86 L1754.0,1217.58 L1756.0,1217.30 L1758.0,1216.99 L1760.0,1216.67 L1762.0,1216.34 L1764.0,1215.98 L1766.0,1215.61 L1768.0,1215.20 L1770.0,1214.76 L1772.0,1214.28 L1774.0,1213.75 L1776.0,1213.17 L1778.0,1212.52 L1780.0,1211.81 L1782.0,1211.03 L1784.0,1210.17 L1786.0,1209.25 L1788.0,1208.26 L1790.0,1207.22 L1792.0,1206.13 L1794.0,1205.00 L1796.0,1203.85 L1798.0,1202.68 L1800.0,1201.50" fill="none" stroke="#bae7ff" stroke-width="6.5"/>
<path d="M378.0,960.90 L380.0,961.25 L382.0,961.59 L384.0,961.94 L386.0,962.29 L388.0,962.63 L390.0,962.98 L392.0,963.33 L394.0,963.68 L396.0,964.03 L398.0,964.38 L400.0,964.73 L402.0,965.08 L404.0,965.43 L406.0,965.78 L408.0,966.13 L410.0,966.48 L412.0,966.83 L414.0,967.18 L416.0,967.53 L418.0,967.88 L420.0,968.23 L422.0,968.58 L424.0,968.93 L426.0,969.29 L428.0,969.64 L430.0,969.99 L432.0,970.34 L434.0,970.68 L436.0,971.03 L438.0,971.38 L440.0,971.73 L442.0,972.08 L444.0,972.42 L446.0,972.77 L448.0,973.12 L450.0,973.46 L452.0,973.81 L454.0,974.15 L456.0,974.49 L458.0,974.83 L460.0,975.17 L462.0,975.51 L464.0,975.85 L466.0,976.19 L468.0,976.53 L470.0,976.86 L472.0,977.20 L474.0,977.53 L476.0,977.87 L478.0,978.20 L480.0,978.53 L482.0,978.86 L484.0,979.19 L486.0,979.53 L488.0,979.87 L490.0,980.21 L492.0,980.56 L494.0,980.92 L496.0,981.29 L498.0,981.66 L500.0,982.04 L502.0,982.43 L504.0,982.82 L506.0,983.22 L508.0,983.63 L510.0,984.03 L512.0,984.43 L514.0,984.83 L516.0,985.23 L518.0,985.62 L520.0,986.01 L522.0,986.38 L524.0,986.75 L526.0,987.10 L528.0,987.44 L530.0,987.76 L532.0,988.06 L534.0,988.35 L536.0,988.61 L538.0,988.86 L540.0,989.07 L542.0,989.27 L544.0,989.43 L546.0,989.57 L548.0,989.68 L550.0,989.77 L552.0,989.83 L554.0,989.86 L556.0,989.87 L558.0,989.86 L560.0,989.82 L562.0,989.77 L564.0,989.71 L566.0,989.62 L568.0,989.52 L570.0,989.41 L572.0,989.28 L574.0,989.14 L576.0,988.98 L578.0,988.81 L580.0,988.62 L582.0,988.42 L584.0,988.20 L586.0,987.97 L588.0,987.72 L590.0,987.46 L592.0,987.18 L594.0,986.89 L596.0,986.58 L598.0,986.25 L600.0,985.90 L602.0,985.53 L604.0,985.14 L606.0,984.72 L608.0,984.26 L610.0,983.77 L612.0,983.25 L614.0,982.69 L616.0,982.10 L618.0,981.47 L620.0,980.82 L622.0,980.14 L624.0,979.44 L626.0,978.73 L628.0,978.00 L630.0,977.27 L632.0,976.53 L634.0,975.79 L636.0,975.06 L638.0,974.33 L640.0,973.60 L642.0,972.88 L644.0,972.16 L646.0,971.44 L648.0,970.72 L650.0,969.99 L652.0,969.26 L654.0,968.53 L656.0,967.79 L658.0,967.04 L660.0,966.29 L662.0,965.54 L664.0,964.78 L666.0,964.02 L668.0,963.25 L670.0,962.49 L672.0,961.72 L674.0,960.96 L676.0,960.19 L678.0,959.43 L680.0,958.68 L682.0,957.93 L684.0,957.18 L686.0,956.45 L688.0,955.72 L690.0,955.00 L692.0,954.29 L694.0,953.59 L696.0,952.90 L698.0,952.23 L700.0,951.57 L702.0,950.92 L704.0,950.29 L706.0,949.68 L708.0,949.09 L710.0,948.51 L712.0,947.95 L714.0,947.41 L716.0,946.89 L718.0,946.38 L720.0,945.89 L722.0,945.42 L724.0,944.96 L726.0,944.50 L728.0,944.06 L730.0,943.62 L732.0,943.18 L734.0,942.75 L736.0,942.30 L738.0,941.86 L740.0,941.40 L742.0,940.94 L744.0,940.47 L746.0,939.99 L748.0,939.51 L750.0,939.02 L752.0,938.55 L754.0,938.08 L756.0,937.62 L758.0,937.18 L760.0,936.77 L762.0,936.38 L764.0,936.03 L766.0,935.71 L768.0,935.44 L770.0,935.20 L772.0,935.02 L774.0,934.88 L776.0,934.78 L778.0,934.72 L780.0,934.69 L782.0,934.70 L784.0,934.74 L786.0,934.80 L788.0,934.89 L790.0,934.99 L792.0,935.12 L794.0,935.26 L796.0,935.43 L798.0,935.61 L800.0,935.81 L802.0,936.02 L804.0,936.26 L806.0,936.52 L808.0,936.80 L810.0,937.11 L812.0,937.45 L814.0,937.81 L816.0,938.21 L818.0,938.63 L820.0,939.10 L822.0,939.60 L824.0,940.13 L826.0,940.70 L828.0,941.30 L830.0,941.94 L832.0,942.61 L834.0,943.32 L836.0,944.06 L838.0,944.83 L840.0,945.65 L842.0,946.50 L844.0,947.38 L846.0,948.31 L848.0,949.28 L850.0,950.29 L852.0,951.33 L854.0,952.40 L856.0,953.49 L858.0,954.60 L860.0,955.72 L862.0,956.84 L864.0,957.96 L866.0,959.07 L868.0,960.16 L870.0,961.23 L872.0,962.28 L874.0,963.31 L876.0,964.31 L878.0,965.30 L880.0,966.27 L882.0,967.23 L884.0,968.17 L886.0,969.09 L888.0,970.00 L890.0,970.90 L892.0,971.78 L894.0,972.65 L896.0,973.50 L898.0,974.33 L900.0,975.15 L902.0,975.95 L904.0,976.73 L906.0,977.50 L908.0,978.25 L910.0,979.00 L912.0,979.73 L914.0,980.45 L916.0,981.17 L918.0,981.88 L920.0,982.58 L922.0,983.26 L924.0,983.93 L926.0,984.58 L928.0,985.20 L930.0,985.80 L932.0,986.36 L934.0,986.88 L936.0,987.36 L938.0,987.79 L940.0,988.16 L942.0,988.49 L944.0,988.76 L946.0,988.97 L948.0,989.14 L950.0,989.26 L952.0,989.34 L954.0,989.40 L956.0,989.43 L958.0,989.44 L960.0,989.44 L962.0,989.43 L964.0,989.42 L966.0,989.40 L968.0,989.38 L970.0,989.35 L972.0,989.32 L974.0,989.29 L976.0,989.26 L978.0,989.22 L980.0,989.17 L982.0,989.11 L984.0,989.05 L986.0,988.97 L988.0,988.88 L990.0,988.77 L992.0,988.65 L994.0,988.50 L996.0,988.34 L998.0,988.16 L1000.0,987.96 L1002.0,987.74 L1004.0,987.50 L1006.0,987.25 L1008.0,986.99 L1010.0,986.71 L1012.0,986.42 L1014.0,986.11 L1016.0,985.80 L1018.0,985.48 L1020.0,985.15 L1022.0,984.81 L1024.0,984.46 L1026.0,984.11 L1028.0,983.76 L1030.0,983.41 L1032.0,983.05 L1034.0,982.69 L1036.0,982.34 L1038.0,981.98 L1040.0,981.63 L1042.0,981.28 L1044.0,980.94 L1046.0,980.60 L1048.0,980.27 L1050.0,979.95 L1052.0,979.64 L1054.0,979.34 L1056.0,979.05 L1058.0,978.78 L1060.0,978.52 L1062.0,978.27 L1064.0,978.04 L1066.0,977.83 L1068.0,977.63 L1070.0,977.46 L1072.0,977.30 L1074.0,977.17 L1076.0,977.06 L1078.0,976.97 L1080.0,976.90 L1082.0,976.86 L1084.0,976.84 L1086.0,976.84 L1088.0,976.86 L1090.0,976.90 L1092.0,976.96 L1094.0,977.04 L1096.0,977.13 L1098.0,977.23 L1100.0,977.36 L1102.0,977.49 L1104.0,977.65 L1106.0,977.82 L1108.0,978.01 L1110.0,978.22 L1112.0,978.44 L1114.0,978.68 L1116.0,978.93 L1118.0,979.20 L1120.0,979.49 L1122.0,979.79 L1124.0,980.10 L1126.0,980.42 L1128.0,980.75 L1130.0,981.09 L1132.0,981.44 L1134.0,981.80 L1136.0,982.16 L1138.0,982.53 L1140.0,982.90 L1142.0,983.28 L1144.0,983.66 L1146.0,984.04 L1148.0,984.42 L1150.0,984.80 L1152.0,985.18 L1154.0,985.56 L1156.0,985.94 L1158.0,986.31 L1160.0,986.67 L1162.0,987.03 L1164.0,987.38 L1166.0,987.72 L1168.0,988.06 L1170.0,988.38 L1172.0,988.70 L1174.0,989.00 L1176.0,989.29 L1178.0,989.57 L1180.0,989.84 L1182.0,990.11 L1184.0,990.36 L1186.0,990.61 L1188.0,990.86 L1190.0,991.10 L1192.0,991.34 L1194.0,991.58 L1196.0,991.82 L1198.0,992.06 L1200.0,992.29 L1202.0,992.52 L1204.0,992.75 L1206.0,992.97 L1208.0,993.19 L1210.0,993.40 L1212.0,993.60 L1214.0,993.80 L1216.0,993.98 L1218.0,994.16 L1220.0,994.32 L1222.0,994.48 L1224.0,994.62 L1226.0,994.74 L1228.0,994.86 L1230.0,994.95 L1232.0,995.04 L1234.0,995.10 L1236.0,995.15 L1238.0,995.19 L1240.0,995.20 L1242.0,995.20 L1244.0,995.19 L1246.0,995.16 L1248.0,995.12 L1250.0,995.07 L1252.0,995.00 L1254.0,994.92 L1256.0,994.83 L1258.0,994.73 L1260.0,994.62 L1262.0,994.50 L1264.0,994.36 L1266.0,994.22 L1268.0,994.07 L1270.0,993.91 L1272.0,993.74 L1274.0,993.57 L1276.0,993.38 L1278.0,993.19 L1280.0,992.99 L1282.0,992.79 L1284.0,992.58 L1286.0,992.36 L1288.0,992.14 L1290.0,991.91 L1292.0,991.68 L1294.0,991.45 L1296.0,991.20 L1298.0,990.96 L1300.0,990.71 L1302.0,990.46 L1304.0,990.21 L1306.0,989.96 L1308.0,989.70 L1310.0,989.44 L1312.0,989.18 L1314.0,988.92 L1316.0,988.66 L1318.0,988.40 L1320.0,988.14 L1322.0,987.88 L1324.0,987.63 L1326.0,987.37 L1328.0,987.11 L1330.0,986.85 L1332.0,986.59 L1334.0,986.33 L1336.0,986.06 L1338.0,985.79 L1340.0,985.52 L1342.0,985.24 L1344.0,984.96 L1346.0,984.68 L1348.0,984.39 L1350.0,984.09 L1352.0,983.79 L1354.0,983.49 L1356.0,983.19 L1358.0,982.88 L1360.0,982.57 L1362.0,982.26 L1364.0,981.95 L1366.0,981.63 L1368.0,981.32 L1370.0,981.00 L1372.0,980.68 L1374.0,980.37 L1376.0,980.05 L1378.0,979.73 L1380.0,979.42 L1382.0,979.11 L1384.0,978.79 L1386.0,978.49 L1388.0,978.18 L1390.0,977.87 L1392.0,977.57 L1394.0,977.27 L1396.0,976.98 L1398.0,976.69 L1400.0,976.40 L1402.0,976.12 L1404.0,975.83 L1406.0,975.56 L1408.0,975.28 L1410.0,975.01 L1412.0,974.73 L1414.0,974.46 L1416.0,974.19 L1418.0,973.92 L1420.0,973.65 L1422.0,973.38 L1424.0,973.12 L1426.0,972.85 L1428.0,972.58 L1430.0,972.31 L1432.0,972.05 L1434.0,971.78 L1436.0,971.52 L1438.0,971.26 L1440.0,970.99 L1442.0,970.73 L1444.0,970.47 L1446.0,970.22 L1448.0,969.96 L1450.0,969.71 L1452.0,969.46 L1454.0,969.21 L1456.0,968.96 L1458.0,968.72 L1460.0,968.47 L1462.0,968.24 L1464.0,968.00 L1466.0,967.76 L1468.0,967.53 L1470.0,967.30 L1472.0,967.08 L1474.0,966.86 L1476.0,966.64 L1478.0,966.42 L1480.0,966.21 L1482.0,966.00 L1484.0,965.80 L1486.0,965.60 L1488.0,965.40 L1490.0,965.21 L1492.0,965.02 L1494.0,964.84 L1496.0,964.66 L1498.0,964.49 L1500.0,964.32 L1502.0,964.16 L1504.0,964.00 L1506.0,963.84 L1508.0,963.69 L1510.0,963.54 L1512.0,963.40 L1514.0,963.27 L1516.0,963.14 L1518.0,963.02 L1520.0,962.90 L1522.0,962.81 L1524.0,962.73 L1526.0,962.68 L1528.0,962.65 L1530.0,962.66 L1532.0,962.70 L1534.0,962.77 L1536.0,962.88 L1538.0,963.02 L1540.0,963.19 L1542.0,963.38 L1544.0,963.59 L1546.0,963.81 L1548.0,964.05 L1550.0,964.30 L1552.0,964.55 L1554.0,964.80 L1556.0,965.05 L1558.0,965.31 L1560.0,965.56 L1562.0,965.82 L1564.0,966.08 L1566.0,966.34 L1568.0,966.61 L1570.0,966.88 L1572.0,967.16 L1574.0,967.44 L1576.0,967.73 L1578.0,968.02 L1580.0,968.32 L1582.0,968.62 L1584.0,968.92 L1586.0,969.23 L1588.0,969.54 L1590.0,969.86 L1592.0,970.17 L1594.0,970.49 L1596.0,970.81 L1598.0,971.14 L1600.0,971.46 L1602.0,971.78 L1604.0,972.11 L1606.0,972.43 L1608.0,972.75 L1610.0,973.08 L1612.0,973.40 L1614.0,973.73 L1616.0,974.05 L1618.0,974.38 L1620.0,974.71 L1622.0,975.04 L1624.0,975.37 L1626.0,975.70 L1628.0,976.04 L1630.0,976.37 L1632.0,976.71 L1634.0,977.05 L1636.0,977.40 L1638.0,977.74 L1640.0,978.08 L1642.0,978.43 L1644.0,978.77 L1646.0,979.12 L1648.0,979.46 L1650.0,979.81 L1652.0,980.15 L1654.0,980.50 L1656.0,980.84 L1658.0,981.18 L1660.0,981.52 L1662.0,981.86 L1664.0,982.20 L1666.0,982.54 L1668.0,982.88 L1670.0,983.22 L1672.0,983.57 L1674.0,983.92 L1676.0,984.28 L1678.0,984.65 L1680.0,985.02 L1682.0,985.41 L1684.0,985.80 L1686.0,986.19 L1688.0,986.59 L1690.0,986.98 L1692.0,987.37 L1694.0,987.75 L1696.0,988.12 L1698.0,988.47 L1700.0,988.80 L1702.0,989.11 L1704.0,989.39 L1706.0,989.64 L1708.0,989.86 L1710.0,990.04 L1712.0,990.19 L1714.0,990.31 L1716.0,990.39 L1718.0,990.44 L1720.0,990.46 L1722.0,990.46 L1724.0,990.44 L1726.0,990.40 L1728.0,990.34 L1730.0,990.27 L1732.0,990.19 L1734.0,990.10 L1736.0,989.99 L1738.0,989.87 L1740.0,989.74 L1742.0,989.60 L1744.0,989.44 L1746.0,989.27 L1748.0,989.09 L1750.0,988.89 L1752.0,988.67 L1754.0,988.43 L1756.0,988.17 L1758.0,987.87 L1760.0,987.53 L1762.0,987.14 L1764.0,986.71 L1766.0,986.22 L1768.0,985.69 L1770.0,985.12 L1772.0,984.51 L1774.0,983.88 L1776.0,983.24 L1778.0,982.60 L1780.0,981.96 L1782.0,981.32 L1784.0,980.70 L1786.0,980.09 L1788.0,979.49 L1790.0,978.90 L1792.0,978.31 L1794.0,977.73 L1796.0,977.15 L1798.0,976.58 L1800.0,976.00" fill="none" stroke="#d7380d" stroke-width="6.2"/>
<path d="M384.9,1009.80 L386.9,1009.97 L388.9,1010.13 L390.9,1010.30 L392.9,1010.46 L394.9,1010.63 L396.9,1010.79 L398.9,1010.96 L400.9,1011.12 L402.9,1011.29 L404.9,1011.46 L406.9,1011.62 L408.9,1011.79 L410.9,1011.95 L412.9,1012.12 L414.9,1012.29 L416.9,1012.45 L418.9,1012.62 L420.9,1012.78 L422.9,1012.95 L424.9,1013.12 L426.9,1013.28 L428.9,1013.45 L430.9,1013.61 L432.9,1013.78 L434.9,1013.94 L436.9,1014.11 L438.9,1014.28 L440.9,1014.44 L442.9,1014.61 L444.9,1014.77 L446.9,1014.94 L448.9,1015.10 L450.9,1015.27 L452.9,1015.43 L454.9,1015.60 L456.9,1015.77 L458.9,1015.93 L460.9,1016.10 L462.9,1016.26 L464.9,1016.42 L466.9,1016.59 L468.9,1016.75 L470.9,1016.92 L472.9,1017.08 L474.9,1017.25 L476.9,1017.41 L478.9,1017.58 L480.9,1017.74 L482.9,1017.91 L484.9,1018.07 L486.9,1018.24 L488.9,1018.41 L490.9,1018.59 L492.9,1018.76 L494.9,1018.95 L496.9,1019.13 L498.9,1019.32 L500.9,1019.52 L502.9,1019.72 L504.9,1019.92 L506.9,1020.12 L508.9,1020.33 L510.9,1020.54 L512.9,1020.75 L514.9,1020.96 L516.9,1021.17 L518.9,1021.38 L520.9,1021.59 L522.9,1021.80 L524.9,1022.00 L526.9,1022.20 L528.9,1022.40 L530.9,1022.59 L532.9,1022.78 L534.9,1022.96 L536.9,1023.13 L538.9,1023.30 L540.9,1023.46 L542.9,1023.61 L544.9,1023.75 L546.9,1023.88 L548.9,1024.00 L550.9,1024.11 L552.9,1024.20 L554.9,1024.29 L556.9,1024.36 L558.9,1024.41 L560.9,1024.46 L562.9,1024.48 L564.9,1024.49 L566.9,1024.48 L568.9,1024.45 L570.9,1024.40 L572.9,1024.33 L574.9,1024.24 L576.9,1024.14 L578.9,1024.01 L580.9,1023.87 L582.9,1023.71 L584.9,1023.53 L586.9,1023.34 L588.9,1023.13 L590.9,1022.90 L592.9,1022.67 L594.9,1022.42 L596.9,1022.17 L598.9,1021.90 L600.9,1021.62 L602.9,1021.34 L604.9,1021.04 L606.9,1020.75 L608.9,1020.44 L610.9,1020.14 L612.9,1019.82 L614.9,1019.51 L616.9,1019.20 L618.9,1018.88 L620.9,1018.57 L622.9,1018.25 L624.9,1017.94 L626.9,1017.63 L628.9,1017.33 L630.9,1017.03 L632.9,1016.73 L634.9,1016.43 L636.9,1016.14 L638.9,1015.85 L640.9,1015.56 L642.9,1015.27 L644.9,1014.98 L646.9,1014.69 L648.9,1014.39 L650.9,1014.09 L652.9,1013.79 L654.9,1013.49 L656.9,1013.18 L658.9,1012.87 L660.9,1012.55 L662.9,1012.24 L664.9,1011.92 L666.9,1011.60 L668.9,1011.28 L670.9,1010.96 L672.9,1010.64 L674.9,1010.31 L676.9,1009.99 L678.9,1009.66 L680.9,1009.34 L682.9,1009.01 L684.9,1008.68 L686.9,1008.36 L688.9,1008.03 L690.9,1007.71 L692.9,1007.38 L694.9,1007.06 L696.9,1006.74 L698.9,1006.42 L700.9,1006.10 L702.9,1005.79 L704.9,1005.47 L706.9,1005.16 L708.9,1004.85 L710.9,1004.54 L712.9,1004.23 L714.9,1003.92 L716.9,1003.61 L718.9,1003.29 L720.9,1002.97 L722.9,1002.64 L724.9,1002.31 L726.9,1001.97 L728.9,1001.63 L730.9,1001.28 L732.9,1000.92 L734.9,1000.56 L736.9,1000.20 L738.9,999.84 L740.9,999.47 L742.9,999.11 L744.9,998.75 L746.9,998.39 L748.9,998.04 L750.9,997.69 L752.9,997.35 L754.9,997.02 L756.9,996.69 L758.9,996.38 L760.9,996.08 L762.9,995.79 L764.9,995.52 L766.9,995.26 L768.9,995.02 L770.9,994.79 L772.9,994.59 L774.9,994.40 L776.9,994.24 L778.9,994.10 L780.9,993.98 L782.9,993.89 L784.9,993.82 L786.9,993.78 L788.9,993.77 L790.9,993.78 L792.9,993.82 L794.9,993.89 L796.9,993.98 L798.9,994.10 L800.9,994.24 L802.9,994.41 L804.9,994.60 L806.9,994.81 L808.9,995.04 L810.9,995.30 L812.9,995.57 L814.9,995.86 L816.9,996.17 L818.9,996.50 L820.9,996.84 L822.9,997.19 L824.9,997.56 L826.9,997.94 L828.9,998.34 L830.9,998.74 L832.9,999.15 L834.9,999.57 L836.9,1000.00 L838.9,1000.44 L840.9,1000.88 L842.9,1001.33 L844.9,1001.78 L846.9,1002.24 L848.9,1002.69 L850.9,1003.15 L852.9,1003.61 L854.9,1004.07 L856.9,1004.53 L858.9,1005.00 L860.9,1005.47 L862.9,1005.95 L864.9,1006.45 L866.9,1006.95 L868.9,1007.48 L870.9,1008.02 L872.9,1008.57 L874.9,1009.15 L876.9,1009.75 L878.9,1010.36 L880.9,1010.98 L882.9,1011.61 L884.9,1012.25 L886.9,1012.90 L888.9,1013.55 L890.9,1014.21 L892.9,1014.86 L894.9,1015.50 L896.9,1016.14 L898.9,1016.77 L900.9,1017.38 L902.9,1017.98 L904.9,1018.57 L906.9,1019.13 L908.9,1019.66 L910.9,1020.18 L912.9,1020.66 L914.9,1021.11 L916.9,1021.53 L918.9,1021.92 L920.9,1022.27 L922.9,1022.58 L924.9,1022.87 L926.9,1023.12 L928.9,1023.34 L930.9,1023.54 L932.9,1023.72 L934.9,1023.88 L936.9,1024.02 L938.9,1024.15 L940.9,1024.27 L942.9,1024.38 L944.9,1024.47 L946.9,1024.56 L948.9,1024.64 L950.9,1024.71 L952.9,1024.77 L954.9,1024.83 L956.9,1024.87 L958.9,1024.90 L960.9,1024.92 L962.9,1024.93 L964.9,1024.94 L966.9,1024.93 L968.9,1024.91 L970.9,1024.88 L972.9,1024.83 L974.9,1024.78 L976.9,1024.72 L978.9,1024.65 L980.9,1024.57 L982.9,1024.48 L984.9,1024.38 L986.9,1024.27 L988.9,1024.16 L990.9,1024.04 L992.9,1023.91 L994.9,1023.78 L996.9,1023.64 L998.9,1023.50 L1000.9,1023.35 L1002.9,1023.20 L1004.9,1023.05 L1006.9,1022.89 L1008.9,1022.74 L1010.9,1022.58 L1012.9,1022.42 L1014.9,1022.26 L1016.9,1022.10 L1018.9,1021.95 L1020.9,1021.79 L1022.9,1021.64 L1024.9,1021.49 L1026.9,1021.34 L1028.9,1021.19 L1030.9,1021.05 L1032.9,1020.90 L1034.9,1020.75 L1036.9,1020.61 L1038.9,1020.46 L1040.9,1020.30 L1042.9,1020.15 L1044.9,1019.99 L1046.9,1019.82 L1048.9,1019.65 L1050.9,1019.48 L1052.9,1019.30 L1054.9,1019.13 L1056.9,1018.95 L1058.9,1018.77 L1060.9,1018.60 L1062.9,1018.42 L1064.9,1018.25 L1066.9,1018.08 L1068.9,1017.92 L1070.9,1017.76 L1072.9,1017.60 L1074.9,1017.46 L1076.9,1017.32 L1078.9,1017.18 L1080.9,1017.06 L1082.9,1016.95 L1084.9,1016.85 L1086.9,1016.76 L1088.9,1016.68 L1090.9,1016.61 L1092.9,1016.56 L1094.9,1016.52 L1096.9,1016.49 L1098.9,1016.48 L1100.9,1016.48 L1102.9,1016.50 L1104.9,1016.52 L1106.9,1016.56 L1108.9,1016.61 L1110.9,1016.67 L1112.9,1016.74 L1114.9,1016.81 L1116.9,1016.90 L1118.9,1017.00 L1120.9,1017.10 L1122.9,1017.21 L1124.9,1017.33 L1126.9,1017.46 L1128.9,1017.59 L1130.9,1017.73 L1132.9,1017.87 L1134.9,1018.02 L1136.9,1018.17 L1138.9,1018.33 L1140.9,1018.49 L1142.9,1018.65 L1144.9,1018.82 L1146.9,1018.99 L1148.9,1019.16 L1150.9,1019.33 L1152.9,1019.51 L1154.9,1019.68 L1156.9,1019.85 L1158.9,1020.03 L1160.9,1020.20 L1162.9,1020.38 L1164.9,1020.55 L1166.9,1020.72 L1168.9,1020.88 L1170.9,1021.05 L1172.9,1021.21 L1174.9,1021.37 L1176.9,1021.52 L1178.9,1021.68 L1180.9,1021.83 L1182.9,1021.98 L1184.9,1022.14 L1186.9,1022.29 L1188.9,1022.45 L1190.9,1022.62 L1192.9,1022.78 L1194.9,1022.95 L1196.9,1023.12 L1198.9,1023.30 L1200.9,1023.48 L1202.9,1023.66 L1204.9,1023.84 L1206.9,1024.02 L1208.9,1024.20 L1210.9,1024.37 L1212.9,1024.54 L1214.9,1024.71 L1216.9,1024.88 L1218.9,1025.04 L1220.9,1025.19 L1222.9,1025.34 L1224.9,1025.47 L1226.9,1025.60 L1228.9,1025.72 L1230.9,1025.83 L1232.9,1025.92 L1234.9,1026.00 L1236.9,1026.08 L1238.9,1026.13 L1240.9,1026.18 L1242.9,1026.21 L1244.9,1026.23 L1246.9,1026.24 L1248.9,1026.24 L1250.9,1026.23 L1252.9,1026.22 L1254.9,1026.19 L1256.9,1026.16 L1258.9,1026.13 L1260.9,1026.09 L1262.9,1026.04 L1264.9,1025.99 L1266.9,1025.94 L1268.9,1025.88 L1270.9,1025.81 L1272.9,1025.74 L1274.9,1025.67 L1276.9,1025.59 L1278.9,1025.51 L1280.9,1025.43 L1282.9,1025.34 L1284.9,1025.25 L1286.9,1025.16 L1288.9,1025.06 L1290.9,1024.96 L1292.9,1024.86 L1294.9,1024.76 L1296.9,1024.65 L1298.9,1024.55 L1300.9,1024.44 L1302.9,1024.32 L1304.9,1024.21 L1306.9,1024.10 L1308.9,1023.98 L1310.9,1023.86 L1312.9,1023.75 L1314.9,1023.63 L1316.9,1023.51 L1318.9,1023.39 L1320.9,1023.27 L1322.9,1023.15 L1324.9,1023.03 L1326.9,1022.90 L1328.9,1022.78 L1330.9,1022.66 L1332.9,1022.53 L1334.9,1022.41 L1336.9,1022.28 L1338.9,1022.15 L1340.9,1022.02 L1342.9,1021.88 L1344.9,1021.74 L1346.9,1021.60 L1348.9,1021.46 L1350.9,1021.31 L1352.9,1021.17 L1354.9,1021.02 L1356.9,1020.87 L1358.9,1020.71 L1360.9,1020.56 L1362.9,1020.40 L1364.9,1020.25 L1366.9,1020.09 L1368.9,1019.93 L1370.9,1019.78 L1372.9,1019.62 L1374.9,1019.46 L1376.9,1019.30 L1378.9,1019.14 L1380.9,1018.99 L1382.9,1018.83 L1384.9,1018.67 L1386.9,1018.52 L1388.9,1018.37 L1390.9,1018.21 L1392.9,1018.06 L1394.9,1017.92 L1396.9,1017.77 L1398.9,1017.63 L1400.9,1017.48 L1402.9,1017.35 L1404.9,1017.21 L1406.9,1017.07 L1408.9,1016.94 L1410.9,1016.81 L1412.9,1016.68 L1414.9,1016.55 L1416.9,1016.42 L1418.9,1016.30 L1420.9,1016.17 L1422.9,1016.05 L1424.9,1015.93 L1426.9,1015.81 L1428.9,1015.69 L1430.9,1015.57 L1432.9,1015.45 L1434.9,1015.33 L1436.9,1015.21 L1438.9,1015.10 L1440.9,1014.98 L1442.9,1014.87 L1444.9,1014.75 L1446.9,1014.64 L1448.9,1014.52 L1450.9,1014.41 L1452.9,1014.29 L1454.9,1014.18 L1456.9,1014.07 L1458.9,1013.95 L1460.9,1013.84 L1462.9,1013.73 L1464.9,1013.61 L1466.9,1013.50 L1468.9,1013.38 L1470.9,1013.27 L1472.9,1013.15 L1474.9,1013.03 L1476.9,1012.91 L1478.9,1012.79 L1480.9,1012.67 L1482.9,1012.54 L1484.9,1012.41 L1486.9,1012.27 L1488.9,1012.13 L1490.9,1011.99 L1492.9,1011.85 L1494.9,1011.70 L1496.9,1011.55 L1498.9,1011.40 L1500.9,1011.25 L1502.9,1011.09 L1504.9,1010.94 L1506.9,1010.79 L1508.9,1010.65 L1510.9,1010.50 L1512.9,1010.36 L1514.9,1010.23 L1516.9,1010.10 L1518.9,1009.98 L1520.9,1009.86 L1522.9,1009.76 L1524.9,1009.66 L1526.9,1009.57 L1528.9,1009.50 L1530.9,1009.43 L1532.9,1009.38 L1534.9,1009.34 L1536.9,1009.32 L1538.9,1009.31 L1540.9,1009.32 L1542.9,1009.35 L1544.9,1009.40 L1546.9,1009.47 L1548.9,1009.55 L1550.9,1009.66 L1552.9,1009.78 L1554.9,1009.92 L1556.9,1010.07 L1558.9,1010.23 L1560.9,1010.41 L1562.9,1010.59 L1564.9,1010.79 L1566.9,1010.99 L1568.9,1011.19 L1570.9,1011.40 L1572.9,1011.60 L1574.9,1011.81 L1576.9,1012.02 L1578.9,1012.22 L1580.9,1012.42 L1582.9,1012.61 L1584.9,1012.80 L1586.9,1012.98 L1588.9,1013.17 L1590.9,1013.35 L1592.9,1013.53 L1594.9,1013.70 L1596.9,1013.88 L1598.9,1014.06 L1600.9,1014.24 L1602.9,1014.41 L1604.9,1014.59 L1606.9,1014.77 L1608.9,1014.95 L1610.9,1015.13 L1612.9,1015.31 L1614.9,1015.49 L1616.9,1015.67 L1618.9,1015.85 L1620.9,1016.03 L1622.9,1016.21 L1624.9,1016.39 L1626.9,1016.57 L1628.9,1016.75 L1630.9,1016.92 L1632.9,1017.10 L1634.9,1017.27 L1636.9,1017.44 L1638.9,1017.61 L1640.9,1017.78 L1642.9,1017.95 L1644.9,1018.12 L1646.9,1018.29 L1648.9,1018.45 L1650.9,1018.62 L1652.9,1018.78 L1654.9,1018.94 L1656.9,1019.11 L1658.9,1019.27 L1660.9,1019.43 L1662.9,1019.59 L1664.9,1019.76 L1666.9,1019.92 L1668.9,1020.07 L1670.9,1020.23 L1672.9,1020.39 L1674.9,1020.54 L1676.9,1020.70 L1678.9,1020.85 L1680.9,1021.00 L1682.9,1021.15 L1684.9,1021.29 L1686.9,1021.44 L1688.9,1021.58 L1690.9,1021.72 L1692.9,1021.86 L1694.9,1022.00 L1696.9,1022.13 L1698.9,1022.26 L1700.9,1022.40 L1702.9,1022.53 L1704.9,1022.66 L1706.9,1022.80 L1708.9,1022.93 L1710.9,1023.06 L1712.9,1023.20 L1714.9,1023.33 L1716.9,1023.46 L1718.9,1023.59 L1720.9,1023.72 L1722.9,1023.84 L1724.9,1023.95 L1726.9,1024.05 L1728.9,1024.15 L1730.9,1024.24 L1732.9,1024.32 L1734.9,1024.38 L1736.9,1024.44 L1738.9,1024.47 L1740.9,1024.50 L1742.9,1024.51 L1744.9,1024.51 L1746.9,1024.49 L1748.9,1024.46 L1750.9,1024.41 L1752.9,1024.36 L1754.9,1024.28 L1756.9,1024.20 L1758.9,1024.10 L1760.9,1023.98 L1762.9,1023.85 L1764.9,1023.71 L1766.9,1023.55 L1768.9,1023.38 L1770.9,1023.19 L1772.9,1022.99 L1774.9,1022.76 L1776.9,1022.52 L1778.9,1022.27 L1780.9,1022.01 L1782.9,1021.73 L1784.9,1021.45 L1786.9,1021.16 L1788.9,1020.88 L1790.9,1020.61 L1792.9,1020.34 L1794.9,1020.09 L1796.9,1019.84 L1797.0,1019.60" fill="none" stroke="#ffadb5" stroke-width="7" stroke-dasharray="7 6.6"/>
<path d="M378.0,900.20 L380.0,900.81 L382.0,901.43 L384.0,902.04 L386.0,902.65 L388.0,903.27 L390.0,903.88 L392.0,904.50 L394.0,905.11 L396.0,905.73 L398.0,906.35 L400.0,906.96 L402.0,907.58 L404.0,908.19 L406.0,908.81 L408.0,909.42 L410.0,910.04 L412.0,910.65 L414.0,911.27 L416.0,911.88 L418.0,912.49 L420.0,913.11 L422.0,913.72 L424.0,914.33 L426.0,914.94 L428.0,915.55 L430.0,916.15 L432.0,916.76 L434.0,917.37 L436.0,917.97 L438.0,918.57 L440.0,919.18 L442.0,919.78 L444.0,920.38 L446.0,920.99 L448.0,921.59 L450.0,922.19 L452.0,922.80 L454.0,923.41 L456.0,924.01 L458.0,924.62 L460.0,925.22 L462.0,925.83 L464.0,926.43 L466.0,927.03 L468.0,927.63 L470.0,928.22 L472.0,928.81 L474.0,929.39 L476.0,929.97 L478.0,930.54 L480.0,931.11 L482.0,931.67 L484.0,932.23 L486.0,932.78 L488.0,933.33 L490.0,933.88 L492.0,934.43 L494.0,934.98 L496.0,935.53 L498.0,936.09 L500.0,936.65 L502.0,937.21 L504.0,937.78 L506.0,938.34 L508.0,938.91 L510.0,939.47 L512.0,940.02 L514.0,940.57 L516.0,941.11 L518.0,941.64 L520.0,942.16 L522.0,942.67 L524.0,943.16 L526.0,943.63 L528.0,944.09 L530.0,944.52 L532.0,944.94 L534.0,945.33 L536.0,945.69 L538.0,946.03 L540.0,946.33 L542.0,946.61 L544.0,946.85 L546.0,947.07 L548.0,947.24 L550.0,947.39 L552.0,947.50 L554.0,947.57 L556.0,947.62 L558.0,947.64 L560.0,947.63 L562.0,947.59 L564.0,947.53 L566.0,947.46 L568.0,947.36 L570.0,947.24 L572.0,947.10 L574.0,946.94 L576.0,946.76 L578.0,946.57 L580.0,946.36 L582.0,946.13 L584.0,945.87 L586.0,945.60 L588.0,945.31 L590.0,945.00 L592.0,944.66 L594.0,944.30 L596.0,943.92 L598.0,943.50 L600.0,943.06 L602.0,942.58 L604.0,942.07 L606.0,941.52 L608.0,940.94 L610.0,940.33 L612.0,939.67 L614.0,938.98 L616.0,938.24 L618.0,937.46 L620.0,936.65 L622.0,935.79 L624.0,934.88 L626.0,933.93 L628.0,932.92 L630.0,931.87 L632.0,930.77 L634.0,929.61 L636.0,928.39 L638.0,927.11 L640.0,925.77 L642.0,924.38 L644.0,922.94 L646.0,921.45 L648.0,919.92 L650.0,918.36 L652.0,916.77 L654.0,915.17 L656.0,913.57 L658.0,911.96 L660.0,910.37 L662.0,908.79 L664.0,907.23 L666.0,905.69 L668.0,904.18 L670.0,902.68 L672.0,901.20 L674.0,899.74 L676.0,898.30 L678.0,896.87 L680.0,895.45 L682.0,894.04 L684.0,892.64 L686.0,891.26 L688.0,889.89 L690.0,888.53 L692.0,887.17 L694.0,885.83 L696.0,884.49 L698.0,883.16 L700.0,881.82 L702.0,880.48 L704.0,879.12 L706.0,877.76 L708.0,876.39 L710.0,875.00 L712.0,873.60 L714.0,872.20 L716.0,870.80 L718.0,869.40 L720.0,868.01 L722.0,866.64 L724.0,865.28 L726.0,863.96 L728.0,862.66 L730.0,861.40 L732.0,860.18 L734.0,859.01 L736.0,857.89 L738.0,856.84 L740.0,855.85 L742.0,854.92 L744.0,854.08 L746.0,853.32 L748.0,852.64 L750.0,852.06 L752.0,851.57 L754.0,851.18 L756.0,850.89 L758.0,850.70 L760.0,850.61 L762.0,850.61 L764.0,850.71 L766.0,850.90 L768.0,851.18 L770.0,851.53 L772.0,851.96 L774.0,852.46 L776.0,853.03 L778.0,853.66 L780.0,854.34 L782.0,855.09 L784.0,855.88 L786.0,856.72 L788.0,857.61 L790.0,858.53 L792.0,859.49 L794.0,860.48 L796.0,861.50 L798.0,862.54 L800.0,863.60 L802.0,864.68 L804.0,865.77 L806.0,866.87 L808.0,867.97 L810.0,869.08 L812.0,870.19 L814.0,871.29 L816.0,872.40 L818.0,873.50 L820.0,874.61 L822.0,875.71 L824.0,876.83 L826.0,877.95 L828.0,879.08 L830.0,880.23 L832.0,881.39 L834.0,882.56 L836.0,883.75 L838.0,884.96 L840.0,886.18 L842.0,887.42 L844.0,888.67 L846.0,889.94 L848.0,891.22 L850.0,892.52 L852.0,893.83 L854.0,895.15 L856.0,896.49 L858.0,897.85 L860.0,899.22 L862.0,900.61 L864.0,902.01 L866.0,903.44 L868.0,904.88 L870.0,906.34 L872.0,907.82 L874.0,909.31 L876.0,910.81 L878.0,912.31 L880.0,913.80 L882.0,915.29 L884.0,916.75 L886.0,918.19 L888.0,919.59 L890.0,920.97 L892.0,922.31 L894.0,923.61 L896.0,924.88 L898.0,926.12 L900.0,927.33 L902.0,928.50 L904.0,929.65 L906.0,930.76 L908.0,931.84 L910.0,932.89 L912.0,933.91 L914.0,934.90 L916.0,935.86 L918.0,936.78 L920.0,937.67 L922.0,938.54 L924.0,939.37 L926.0,940.18 L928.0,940.96 L930.0,941.71 L932.0,942.44 L934.0,943.15 L936.0,943.83 L938.0,944.49 L940.0,945.13 L942.0,945.75 L944.0,946.34 L946.0,946.92 L948.0,947.46 L950.0,947.98 L952.0,948.46 L954.0,948.91 L956.0,949.32 L958.0,949.70 L960.0,950.04 L962.0,950.34 L964.0,950.60 L966.0,950.84 L968.0,951.05 L970.0,951.23 L972.0,951.40 L974.0,951.54 L976.0,951.68 L978.0,951.79 L980.0,951.90 L982.0,951.99 L984.0,952.08 L986.0,952.15 L988.0,952.20 L990.0,952.24 L992.0,952.27 L994.0,952.27 L996.0,952.25 L998.0,952.21 L1000.0,952.14 L1002.0,952.04 L1004.0,951.91 L1006.0,951.75 L1008.0,951.56 L1010.0,951.33 L1012.0,951.09 L1014.0,950.81 L1016.0,950.52 L1018.0,950.21 L1020.0,949.89 L1022.0,949.55 L1024.0,949.21 L1026.0,948.87 L1028.0,948.51 L1030.0,948.16 L1032.0,947.80 L1034.0,947.44 L1036.0,947.08 L1038.0,946.71 L1040.0,946.33 L1042.0,945.94 L1044.0,945.55 L1046.0,945.15 L1048.0,944.74 L1050.0,944.33 L1052.0,943.92 L1054.0,943.52 L1056.0,943.11 L1058.0,942.72 L1060.0,942.33 L1062.0,941.96 L1064.0,941.61 L1066.0,941.27 L1068.0,940.94 L1070.0,940.64 L1072.0,940.35 L1074.0,940.08 L1076.0,939.82 L1078.0,939.58 L1080.0,939.36 L1082.0,939.15 L1084.0,938.95 L1086.0,938.77 L1088.0,938.60 L1090.0,938.45 L1092.0,938.32 L1094.0,938.20 L1096.0,938.11 L1098.0,938.03 L1100.0,937.97 L1102.0,937.94 L1104.0,937.92 L1106.0,937.93 L1108.0,937.95 L1110.0,937.99 L1112.0,938.06 L1114.0,938.13 L1116.0,938.23 L1118.0,938.34 L1120.0,938.48 L1122.0,938.62 L1124.0,938.79 L1126.0,938.96 L1128.0,939.16 L1130.0,939.37 L1132.0,939.60 L1134.0,939.84 L1136.0,940.09 L1138.0,940.37 L1140.0,940.66 L1142.0,940.97 L1144.0,941.30 L1146.0,941.65 L1148.0,942.02 L1150.0,942.42 L1152.0,942.84 L1154.0,943.29 L1156.0,943.76 L1158.0,944.25 L1160.0,944.77 L1162.0,945.30 L1164.0,945.85 L1166.0,946.41 L1168.0,946.98 L1170.0,947.56 L1172.0,948.14 L1174.0,948.72 L1176.0,949.30 L1178.0,949.87 L1180.0,950.43 L1182.0,950.99 L1184.0,951.52 L1186.0,952.05 L1188.0,952.55 L1190.0,953.04 L1192.0,953.50 L1194.0,953.95 L1196.0,954.38 L1198.0,954.79 L1200.0,955.19 L1202.0,955.58 L1204.0,955.95 L1206.0,956.32 L1208.0,956.67 L1210.0,957.02 L1212.0,957.35 L1214.0,957.68 L1216.0,958.00 L1218.0,958.30 L1220.0,958.60 L1222.0,958.88 L1224.0,959.15 L1226.0,959.40 L1228.0,959.64 L1230.0,959.87 L1232.0,960.08 L1234.0,960.27 L1236.0,960.45 L1238.0,960.61 L1240.0,960.75 L1242.0,960.87 L1244.0,960.97 L1246.0,961.05 L1248.0,961.11 L1250.0,961.14 L1252.0,961.16 L1254.0,961.15 L1256.0,961.12 L1258.0,961.06 L1260.0,960.98 L1262.0,960.88 L1264.0,960.76 L1266.0,960.62 L1268.0,960.45 L1270.0,960.27 L1272.0,960.08 L1274.0,959.86 L1276.0,959.63 L1278.0,959.39 L1280.0,959.14 L1282.0,958.87 L1284.0,958.60 L1286.0,958.32 L1288.0,958.03 L1290.0,957.73 L1292.0,957.43 L1294.0,957.13 L1296.0,956.82 L1298.0,956.51 L1300.0,956.20 L1302.0,955.89 L1304.0,955.57 L1306.0,955.26 L1308.0,954.94 L1310.0,954.62 L1312.0,954.29 L1314.0,953.96 L1316.0,953.62 L1318.0,953.28 L1320.0,952.93 L1322.0,952.57 L1324.0,952.21 L1326.0,951.83 L1328.0,951.46 L1330.0,951.08 L1332.0,950.69 L1334.0,950.30 L1336.0,949.91 L1338.0,949.51 L1340.0,949.11 L1342.0,948.70 L1344.0,948.30 L1346.0,947.89 L1348.0,947.48 L1350.0,947.07 L1352.0,946.66 L1354.0,946.26 L1356.0,945.85 L1358.0,945.44 L1360.0,945.03 L1362.0,944.63 L1364.0,944.23 L1366.0,943.82 L1368.0,943.42 L1370.0,943.02 L1372.0,942.63 L1374.0,942.23 L1376.0,941.83 L1378.0,941.43 L1380.0,941.03 L1382.0,940.63 L1384.0,940.22 L1386.0,939.82 L1388.0,939.42 L1390.0,939.02 L1392.0,938.61 L1394.0,938.21 L1396.0,937.81 L1398.0,937.40 L1400.0,937.00 L1402.0,936.60 L1404.0,936.20 L1406.0,935.80 L1408.0,935.41 L1410.0,935.01 L1412.0,934.61 L1414.0,934.22 L1416.0,933.83 L1418.0,933.44 L1420.0,933.05 L1422.0,932.66 L1424.0,932.27 L1426.0,931.88 L1428.0,931.49 L1430.0,931.10 L1432.0,930.71 L1434.0,930.32 L1436.0,929.93 L1438.0,929.54 L1440.0,929.16 L1442.0,928.77 L1444.0,928.39 L1446.0,928.01 L1448.0,927.64 L1450.0,927.27 L1452.0,926.90 L1454.0,926.54 L1456.0,926.19 L1458.0,925.84 L1460.0,925.49 L1462.0,925.15 L1464.0,924.82 L1466.0,924.49 L1468.0,924.16 L1470.0,923.83 L1472.0,923.50 L1474.0,923.18 L1476.0,922.85 L1478.0,922.53 L1480.0,922.20 L1482.0,921.88 L1484.0,921.56 L1486.0,921.24 L1488.0,920.93 L1490.0,920.62 L1492.0,920.31 L1494.0,920.02 L1496.0,919.74 L1498.0,919.46 L1500.0,919.20 L1502.0,918.95 L1504.0,918.72 L1506.0,918.50 L1508.0,918.30 L1510.0,918.12 L1512.0,917.96 L1514.0,917.81 L1516.0,917.69 L1518.0,917.60 L1520.0,917.52 L1522.0,917.47 L1524.0,917.44 L1526.0,917.43 L1528.0,917.44 L1530.0,917.48 L1532.0,917.53 L1534.0,917.60 L1536.0,917.70 L1538.0,917.81 L1540.0,917.94 L1542.0,918.09 L1544.0,918.26 L1546.0,918.45 L1548.0,918.67 L1550.0,918.91 L1552.0,919.18 L1554.0,919.49 L1556.0,919.82 L1558.0,920.19 L1560.0,920.59 L1562.0,921.02 L1564.0,921.47 L1566.0,921.95 L1568.0,922.44 L1570.0,922.95 L1572.0,923.48 L1574.0,924.00 L1576.0,924.54 L1578.0,925.07 L1580.0,925.60 L1582.0,926.12 L1584.0,926.63 L1586.0,927.14 L1588.0,927.64 L1590.0,928.14 L1592.0,928.62 L1594.0,929.11 L1596.0,929.59 L1598.0,930.07 L1600.0,930.55 L1602.0,931.03 L1604.0,931.50 L1606.0,931.98 L1608.0,932.46 L1610.0,932.94 L1612.0,933.43 L1614.0,933.91 L1616.0,934.40 L1618.0,934.88 L1620.0,935.38 L1622.0,935.87 L1624.0,936.37 L1626.0,936.87 L1628.0,937.38 L1630.0,937.89 L1632.0,938.41 L1634.0,938.94 L1636.0,939.47 L1638.0,940.01 L1640.0,940.55 L1642.0,941.10 L1644.0,941.66 L1646.0,942.21 L1648.0,942.77 L1650.0,943.32 L1652.0,943.88 L1654.0,944.43 L1656.0,944.97 L1658.0,945.51 L1660.0,946.04 L1662.0,946.56 L1664.0,947.07 L1666.0,947.57 L1668.0,948.05 L1670.0,948.53 L1672.0,949.00 L1674.0,949.47 L1676.0,949.92 L1678.0,950.38 L1680.0,950.83 L1682.0,951.27 L1684.0,951.71 L1686.0,952.14 L1688.0,952.55 L1690.0,952.95 L1692.0,953.33 L1694.0,953.69 L1696.0,954.02 L1698.0,954.31 L1700.0,954.57 L1702.0,954.79 L1704.0,954.98 L1706.0,955.12 L1708.0,955.22 L1710.0,955.28 L1712.0,955.31 L1714.0,955.31 L1716.0,955.28 L1718.0,955.23 L1720.0,955.15 L1722.0,955.05 L1724.0,954.93 L1726.0,954.79 L1728.0,954.64 L1730.0,954.46 L1732.0,954.27 L1734.0,954.06 L1736.0,953.82 L1738.0,953.57 L1740.0,953.29 L1742.0,952.98 L1744.0,952.65 L1746.0,952.29 L1748.0,951.89 L1750.0,951.46 L1752.0,951.00 L1754.0,950.50 L1756.0,949.96 L1758.0,949.39 L1760.0,948.77 L1762.0,948.13 L1764.0,947.45 L1766.0,946.73 L1768.0,945.98 L1770.0,945.20 L1772.0,944.38 L1774.0,943.53 L1776.0,942.65 L1778.0,941.73 L1780.0,940.78 L1782.0,939.80 L1784.0,938.79 L1786.0,937.75 L1788.0,936.69 L1790.0,935.60 L1792.0,934.50 L1794.0,933.39 L1796.0,932.26 L1798.0,931.13 L1800.0,930.00" fill="none" stroke="#08a2c9" stroke-width="7" stroke-dasharray="7 6.6"/>
<rect x="396" y="835" width="420" height="45" fill="#000"/>
<rect x="976" y="535.5" width="1238" height="2" fill="#a6a6a6"/>
<rect x="988" y="1404.3" width="1226" height="2" fill="#a6a6a6"/>
<circle cx="605" cy="535.2" r="19.7" fill="#595959"/>
<rect x="596.5" y="533.7" width="17" height="3" fill="#000"/>
<rect x="603.5" y="526.7" width="3" height="17" fill="#000"/>
<circle cx="609.8" cy="1403.8" r="19.7" fill="#595959"/>
<rect x="601.3" y="1402.3" width="17" height="3" fill="#000"/>
<rect x="608.3" y="1395.3" width="3" height="17" fill="#000"/>
<rect x="332.8" y="454.5" width="2" height="42" fill="#8a8a8a"/>
<rect x="485.7" y="454.5" width="2" height="42" fill="#8a8a8a"/>
<rect x="638.6" y="454.5" width="2" height="42" fill="#8a8a8a"/>
<rect x="791.5" y="454.5" width="2" height="42" fill="#8a8a8a"/>
<rect x="944.4" y="454.5" width="2" height="42" fill="#8a8a8a"/>
<rect x="1097.3" y="454.5" width="2" height="42" fill="#8a8a8a"/>
<rect x="1250.2" y="454.5" width="2" height="42" fill="#8a8a8a"/>
<rect x="1403.1" y="454.5" width="2" height="42" fill="#8a8a8a"/>
<rect x="1556.0" y="454.5" width="2" height="42" fill="#8a8a8a"/>
<rect x="1708.9" y="454.5" width="2" height="42" fill="#8a8a8a"/>
<rect x="1861.8" y="454.5" width="2" height="42" fill="#8a8a8a"/>
<rect x="2014.7" y="454.5" width="2" height="42" fill="#8a8a8a"/>
<rect x="2167.6" y="454.5" width="2" height="42" fill="#8a8a8a"/>
<rect x="794" y="1474" width="1420" height="52" fill="#092b00"/>
<rect x="794" y="1525.5" width="1420" height="4" fill="#52c41a"/>
<circle cx="794" cy="1527.5" r="9" fill="#52c41a"/>
<rect x="488" y="1572.6" width="304.6" height="52" fill="#613400"/>
<rect x="488" y="1624.4" width="304.6" height="4" fill="#faad14"/>
<circle cx="488" cy="1626.4" r="9" fill="#faad14"/>
<circle cx="792.6" cy="1626.4" r="9" fill="#fa8c16"/>
<rect x="848.4" y="1672.7" width="4" height="53" fill="#135200"/>
<circle cx="850.4" cy="1725.6" r="9" fill="#52c41a"/>
<rect x="1559" y="1671.7" width="4" height="54" fill="#613400"/>
<circle cx="1561" cy="1725.8" r="9" fill="#faad14"/>
</svg>
<div class="t" style="top:48.7px;font-size:27.9px;color:#8c8c8c;letter-spacing:-2.44px;left:27.0px;">ПОСТ №1</div>
<div class="t" style="top:133.7px;font-size:36.3px;color:#262626;letter-spacing:-0.45px;left:27.0px;">Мониторинг</div>
<div class="t" style="top:210.5px;font-size:36.3px;color:#262626;letter-spacing:-0.99px;left:27.0px;">Назначения</div>
<div class="t" style="top:372.5px;font-size:27.9px;color:#8c8c8c;letter-spacing:-0.73px;left:27.0px;">КОЙКИ</div>
<div class="t" style="top:457.5px;font-size:36.9px;color:#12979d;letter-spacing:-2.04px;left:25.5px;">№ 1. Ждано ...</div>
<div class="t" style="top:533.8px;font-size:36.9px;color:#262626;letter-spacing:-1.51px;left:25.5px;">№ 2. Конста...</div>
<div class="t" style="top:610.1px;font-size:36.9px;color:#262626;letter-spacing:-1.52px;left:25.5px;">№ 3. Антоне...</div>
<div class="t" style="top:686.4px;font-size:36.9px;color:#262626;letter-spacing:-1.48px;left:25.5px;">№ 4. Рыжко...</div>
<div class="t" style="top:762.7px;font-size:36.9px;color:#262626;letter-spacing:-1.36px;left:25.5px;">№ 5. Пучков...</div>
<div class="t" style="top:839.0px;font-size:36.9px;color:#262626;letter-spacing:-1.35px;left:25.5px;">№ 6. Конста...</div>
<div class="t" style="top:915.3px;font-size:36.9px;color:#262626;letter-spacing:-1.92px;left:25.5px;">№ 7. Радзих...</div>
<div class="t" style="top:991.6px;font-size:36.9px;color:#262626;letter-spacing:-1.74px;left:25.5px;">№ 8. Павлов...</div>
<div class="t" style="top:1340.0px;font-size:27.9px;color:#8c8c8c;letter-spacing:-3.06px;left:27.5px;">ОБЩЕЕ</div>
<div class="t" style="top:1425.0px;font-size:36.3px;color:#262626;letter-spacing:-0.56px;left:28.5px;">Документы</div>
<div class="t" style="top:1501.3px;font-size:36.3px;color:#262626;letter-spacing:-1.35px;left:28.5px;">Архив</div>
<div class="t" style="top:1665.2px;font-size:27.9px;color:#8c8c8c;letter-spacing:-1.84px;left:28.5px;">ДОКТОР (Я)</div>
<div class="t" style="top:1750.1px;font-size:36.3px;color:#262626;letter-spacing:-1.52px;left:28.5px;">Леонидов А. ...</div>
<div class="t" style="top:42.5px;font-size:32px;color:#12979d;letter-spacing:-1.19px;left:323.0px;">Реанимационная карта</div>
<div class="t" style="top:42.5px;font-size:32px;color:#262626;letter-spacing:-0.78px;left:693.4px;">Лист назначений</div>
<div class="t" style="top:42.5px;font-size:32px;color:#262626;letter-spacing:-1.12px;left:977.8px;">Карта пациента</div>
<div class="t" style="top:42.5px;font-size:32px;color:#262626;letter-spacing:-1.17px;left:1243.6px;">Файлы</div>
<div class="t" style="top:42.5px;font-size:32px;color:#262626;letter-spacing:-1.16px;left:1384.4px;">Расходные материалы</div>
<div class="t" style="top:42.5px;font-size:32px;color:#262626;letter-spacing:-0.48px;left:1747.0px;">Экспресс-исследования</div>
<div class="t" style="top:42.5px;font-size:32px;color:#262626;letter-spacing:-0.85px;left:2140.8px;">Работа с документами</div>
<div class="t" style="top:183.7px;font-size:51.8px;color:#222222;-webkit-text-stroke:1.86px #222222;letter-spacing:1.24px;left:323.9px;">Реанимационная карта</div>
<div class="t" style="top:264.3px;font-size:51.8px;color:#8f8f8f;-webkit-text-stroke:1.86px #8f8f8f;letter-spacing:0.15px;left:323.9px;">№ 1. Жданов Д. М.</div>
<div class="t" style="top:144.5px;font-size:37.8px;color:#8f8f8f;letter-spacing:-1.80px;left:1593.8px;">Суток в реанимации:</div>
<div class="t" style="top:144.5px;font-size:37.8px;color:#222222;letter-spacing:-3.22px;left:1936.4px;">12,</div>
<div class="t" style="top:144.5px;font-size:37.8px;color:#8f8f8f;letter-spacing:-1.45px;left:2016.4px;">Койка:</div>
<div class="t" style="top:144.5px;font-size:37.8px;color:#222222;letter-spacing:-3.78px;left:2128.9px;">№1,</div>
<div class="t" style="top:144.5px;font-size:37.8px;color:#8f8f8f;letter-spacing:-1.46px;left:2227.0px;">Группа крови:</div>
<div class="t" style="top:144.5px;font-size:37.8px;color:#222222;letter-spacing:-2.37px;left:2455.3px;">B(III), Rh+,</div>
<div class="t" style="top:207.0px;font-size:37.8px;color:#8f8f8f;letter-spacing:-1.46px;left:1591.8px;">Возраст:</div>
<div class="t" style="top:207.0px;font-size:37.8px;color:#222222;letter-spacing:-1.18px;left:1741.3px;">33 года,</div>
<div class="t" style="top:207.0px;font-size:37.8px;color:#8f8f8f;letter-spacing:-2.24px;left:1906.7px;">Пол:</div>
<div class="t" style="top:207.0px;font-size:37.8px;color:#222222;letter-spacing:-0.84px;left:1985.7px;">Мужской,</div>
<div class="t" style="top:207.0px;font-size:37.8px;color:#8f8f8f;letter-spacing:-2.22px;left:2181.4px;">Аллергия:</div>
<div class="t" style="top:207.0px;font-size:37.8px;color:#222222;letter-spacing:-1.64px;left:2347.5px;">Непереносимость ЛС,</div>
<div class="t" style="top:269.8px;font-size:37.8px;color:#8f8f8f;letter-spacing:-1.10px;left:1593.9px;">Диагноз:</div>
<div class="t" style="top:269.8px;font-size:37.8px;color:#222222;letter-spacing:-1.77px;left:1745.7px;">Хроническая сердечная недостаточность 2Бс., IVФК по NYH...</div>
<div class="t" style="top:392.9px;font-size:29.6px;color:#ffffff;-webkit-text-stroke:1.07px #ffffff;letter-spacing:1.05px;left:394.9px;">17 дек (сегодня)</div>
<div class="t" style="top:392.7px;font-size:29.6px;color:#ffffff;-webkit-text-stroke:1.07px #ffffff;letter-spacing:1.06px;left:1437.5px;">Показывать: по часам</div>
<div class="t" style="top:392.7px;font-size:29.6px;color:#ffffff;-webkit-text-stroke:1.07px #ffffff;letter-spacing:1.65px;left:1953.9px;">Масштаб</div>
<div class="t" style="top:465.4px;font-size:26.2px;color:#a8a8a8;letter-spacing:1.01px;left:344.2px;">07:00</div>
<div class="t" style="top:465.4px;font-size:26.2px;color:#a8a8a8;letter-spacing:1.01px;left:497.1px;">08:00</div>
<div class="t" style="top:465.4px;font-size:26.2px;color:#a8a8a8;letter-spacing:1.01px;left:650.0px;">09:00</div>
<div class="t" style="top:465.4px;font-size:26.2px;color:#a8a8a8;letter-spacing:1.26px;left:801.9px;">10:00</div>
<div class="t" style="top:465.4px;font-size:26.2px;color:#a8a8a8;letter-spacing:1.74px;left:954.8px;">11:00</div>
<div class="t" style="top:465.4px;font-size:26.2px;color:#a8a8a8;letter-spacing:1.26px;left:1107.7px;">12:00</div>
<div class="t" style="top:465.4px;font-size:26.2px;color:#a8a8a8;letter-spacing:1.26px;left:1260.6px;">13:00</div>
<div class="t" style="top:465.4px;font-size:26.2px;color:#a8a8a8;letter-spacing:1.26px;left:1413.5px;">14:00</div>
<div class="t" style="top:465.4px;font-size:26.2px;color:#a8a8a8;letter-spacing:1.26px;left:1566.4px;">15:00</div>
<div class="t" style="top:465.4px;font-size:26.2px;color:#a8a8a8;letter-spacing:1.26px;left:1719.3px;">16:00</div>
<div class="t" style="top:465.4px;font-size:26.2px;color:#a8a8a8;letter-spacing:1.26px;left:1872.2px;">17:00</div>
<div class="t" style="top:465.4px;font-size:26.2px;color:#a8a8a8;letter-spacing:1.26px;left:2025.1px;">18:00</div>
<div class="t" style="top:465.4px;font-size:26.2px;color:#a8a8a8;letter-spacing:1.26px;left:2178.0px;">19:00</div>
<div class="t" style="top:532.7px;font-size:46.5px;color:#ffffff;letter-spacing:-1.71px;left:324.0px;">Показатели</div>
<div class="t" style="top:534.0px;font-size:30.9px;color:#999999;-webkit-text-stroke:1.11px #999999;letter-spacing:0.51px;left:637.6px;">Добавить показатель</div>
<div class="t" style="top:1401.5px;font-size:46.5px;color:#ffffff;letter-spacing:-1.92px;left:324.0px;">Назначения</div>
<div class="t" style="top:1401.6px;font-size:30.9px;color:#999999;-webkit-text-stroke:1.11px #999999;letter-spacing:0.55px;left:642.1px;">Добавить назначение</div>
<div class="t" style="top:628.3px;font-size:36.3px;color:#52c41a;letter-spacing:-0.64px;left:404.8px;">ЧСС (уд/мин)</div>
<div class="t" style="top:858.0px;font-size:36.3px;color:#dc4112;letter-spacing:-0.83px;left:404.8px;">НАД среднее (мм. рт. ст.)</div>
<div class="t" style="top:1086.9px;font-size:36.3px;color:#bae7ff;letter-spacing:-2.47px;left:405.8px;">SPO2 (%)</div>
<div class="t" style="top:627.1px;font-size:27.6px;color:#52c41a;left:322.0px;">140</div>
<div class="t" style="top:663.1px;font-size:27.6px;color:#52c41a;left:322.0px;">120</div>
<div class="t" style="top:699.1px;font-size:27.6px;color:#52c41a;left:322.0px;">100</div>
<div class="t" style="top:735.2px;font-size:27.6px;color:#52c41a;left:337.4px;">80</div>
<div class="t" style="top:771.2px;font-size:27.6px;color:#52c41a;left:337.4px;">60</div>
<div class="t" style="top:807.2px;font-size:27.6px;color:#52c41a;left:352.7px;">0</div>
<div class="t" style="top:856.8px;font-size:27.6px;color:#fa541c;left:322.0px;">140</div>
<div class="t" style="top:892.9px;font-size:27.6px;color:#fa541c;left:322.0px;">120</div>
<div class="t" style="top:928.9px;font-size:27.6px;color:#fa541c;left:322.0px;">100</div>
<div class="t" style="top:964.6px;font-size:27.6px;color:#fa541c;left:337.4px;">80</div>
<div class="t" style="top:1001.0px;font-size:27.6px;color:#fa541c;left:337.4px;">60</div>
<div class="t" style="top:1037.0px;font-size:27.6px;color:#fa541c;left:352.7px;">0</div>
<div class="t" style="top:1085.7px;font-size:27.6px;color:#bae7ff;left:322.0px;">100</div>
<div class="t" style="top:1121.7px;font-size:27.6px;color:#bae7ff;left:337.4px;">80</div>
<div class="t" style="top:1158.1px;font-size:27.6px;color:#bae7ff;left:337.4px;">60</div>
<div class="t" style="top:1194.1px;font-size:27.6px;color:#bae7ff;left:337.4px;">40</div>
<div class="t" style="top:1230.1px;font-size:27.6px;color:#bae7ff;left:337.4px;">20</div>
<div class="t" style="top:1266.2px;font-size:27.6px;color:#bae7ff;left:352.7px;">0</div>
<div class="t" style="top:1500.3px;font-size:36.3px;color:#52c41a;letter-spacing:-0.83px;left:802.0px;">Гелофузин (базовая инфузия) 10:00-24:00</div>
<div class="t" style="top:1598.8px;font-size:36.3px;color:#faad14;letter-spacing:-0.37px;left:495.7px;">Гелофузин 08:00-10:00</div>
<div class="t" style="top:1696.3px;font-size:36.3px;color:#52c41a;letter-spacing:-1.02px;left:867.0px;">Амикацин. 10:17</div>
<div class="t" style="top:1696.3px;font-size:36.3px;color:#faad14;letter-spacing:-0.96px;left:1578.5px;">Амикацин. 15:00</div>
<div class="t" style="top:387.4px;font-size:46px;color:#ffffff;letter-spacing:-1.73px;left:2293.5px;">17 дек. 16:28 (Сейчас)</div>
<div class="t" style="top:471.0px;font-size:31.4px;color:#a6a6a6;letter-spacing:-0.50px;left:2303.0px;">Показатели</div>
<div class="t" style="top:535.3px;font-size:27.6px;color:#52c41a;letter-spacing:-0.66px;left:2347.7px;">ЧСС</div>
<div class="t" style="top:576.8px;font-size:37px;color:#52c41a;letter-spacing:-0.55px;left:2348.7px;">67 уд/мин</div>
<div class="t" style="top:642.9px;font-size:27.6px;color:#08a2c9;letter-spacing:-1.03px;left:2347.7px;">НАД систола</div>
<div class="t" style="top:684.8px;font-size:37px;color:#08a2c9;letter-spacing:-0.99px;left:2347.7px;">116/78 мм. рт. ст.</div>
<div class="t" style="top:751.1px;font-size:27.6px;color:#fa541c;letter-spacing:-0.87px;left:2347.7px;">НАД Среднее</div>
<div class="t" style="top:792.8px;font-size:37px;color:#fa541c;letter-spacing:-0.99px;left:2347.7px;">116/78 мм. рт. ст.</div>
<div class="t" style="top:858.8px;font-size:27.6px;color:#ffadb5;letter-spacing:-1.09px;left:2347.7px;">НАД диастола</div>
<div class="t" style="top:900.4px;font-size:37px;color:#ffadb5;letter-spacing:-0.99px;left:2347.7px;">116/78 мм. рт. ст.</div>
<div class="t" style="top:967.5px;font-size:27.6px;color:#bae7ff;letter-spacing:-2.04px;left:2348.7px;">SPO2 (%)</div>
<div class="t" style="top:1007.6px;font-size:37px;color:#bae7ff;letter-spacing:-1.08px;left:2348.7px;">98%</div>
<div class="t" style="top:1101.4px;font-size:31.4px;color:#a6a6a6;letter-spacing:-0.47px;left:2303.0px;">Назначения</div>
<div class="t" style="top:1169.2px;font-size:31.4px;color:#999999;letter-spacing:-0.72px;left:2312.0px;">Недавние</div>
<div class="t" style="top:1221.0px;font-size:36.5px;color:#f5f5f5;letter-spacing:-1.00px;left:2314.0px;">Амикацин (28 мин назад)</div>
<div class="t" style="top:1283.2px;font-size:36.5px;color:#f5f5f5;letter-spacing:-1.27px;left:2313.0px;">Обзидан (21 мин назад)</div>
<div class="t" style="top:1345.8px;font-size:36.5px;color:#f5f5f5;letter-spacing:-1.10px;left:2312.0px;">Престанс (14 мин назад)</div>
<div class="t" style="top:1408.5px;font-size:36.5px;color:#13c2c2;letter-spacing:-0.97px;left:2312.0px;">Показать все...</div>
<div class="t" style="top:1489.2px;font-size:31.4px;color:#999999;letter-spacing:-0.92px;left:2314.0px;">Текущие</div>
<div class="t" style="top:1539.2px;font-size:36.5px;color:#f5f5f5;letter-spacing:-0.96px;left:2311.0px;">Гелофузин (15:00 - 17:00)</div>
<div class="t" style="top:1602.9px;font-size:36.5px;color:#f5f5f5;letter-spacing:-0.85px;left:2313.0px;">Стерофундин (16:00 - 16:30)</div>
<div class="t" style="top:1682.7px;font-size:31.4px;color:#999999;letter-spacing:-0.78px;left:2312.0px;">Ближайшие</div>
<div class="t" style="top:1732.6px;font-size:36.5px;color:#f5f5f5;letter-spacing:-0.94px;left:2313.0px;">Обзидан (через 32 мин)</div>
<svg width="2880" height="1800" viewBox="0 0 2880 1800">
<circle cx="1509.4" cy="1498.3" r="19.8" fill="#237804"/><path d="M1501.4,1497.5 L1507.6000000000001,1504.8 L1517.4,1491.8" fill="none" stroke="#092b00" stroke-width="2.6"/>
<circle cx="1154.5" cy="1694" r="19.8" fill="#237804"/><path d="M1146.5,1693.2 L1152.7,1700.5 L1162.5,1687.5" fill="none" stroke="#092b00" stroke-width="2.6"/>
<circle cx="904.4" cy="1597.5" r="19.7" fill="#ad6800"/><path d="M898.4,1593.1 C898.4,1589.2 901.1,1587.9 904.4,1587.9 C908.4,1587.9 911.1999999999999,1590.1 911.1999999999999,1592.7 C911.1999999999999,1595.5 908.6999999999999,1596.9 906.8,1598.3 C905.0,1599.5 904.4,1600.5 904.4,1602.1" fill="none" stroke="#000" stroke-width="2.9"/><circle cx="904.4" cy="1606.8" r="2.1" fill="#000"/>
<circle cx="1872" cy="1694" r="19.7" fill="#ad6800"/><path d="M1866,1689.6 C1866,1685.7 1868.7,1684.4 1872,1684.4 C1876,1684.4 1878.8,1686.6 1878.8,1689.2 C1878.8,1692 1876.3,1693.4 1874.4,1694.8 C1872.6,1696 1872,1697 1872,1698.6" fill="none" stroke="#000" stroke-width="2.9"/><circle cx="1872" cy="1703.3" r="2.1" fill="#000"/>
<rect x="2214" y="337" width="63" height="1463" fill="#000"/>
<rect x="1798" y="440" width="4" height="1300" fill="#fff"/>
<path d="M1797.7,407 H1992 Q2000,407 2000,415 V443.7 Q2000,451.7 1992,451.7 H1797.7 Z" fill="#fff"/>
<circle cx="1800" cy="708.4" r="13.4" fill="#000" stroke="#52c41a" stroke-width="9"/>
<circle cx="1800" cy="888.7" r="13.4" fill="#000" stroke="#08a2c9" stroke-width="9"/>
<circle cx="1800" cy="933.6" r="13.4" fill="#000" stroke="#fa541c" stroke-width="9"/>
<circle cx="1800" cy="976.2" r="13.4" fill="#000" stroke="#ffadb5" stroke-width="9"/>
<circle cx="1800" cy="1201" r="13.4" fill="#000" stroke="#bae7ff" stroke-width="9"/>
<rect x="2223.4" y="346.6" width="44.2" height="44.4" rx="5" fill="#8c8c8c"/>
<path d="M2245.4,382 V357 M2232.2,372.5 L2245.4,356.6 L2258.6,372.5" fill="none" stroke="#262626" stroke-width="2.8" stroke-linecap="round" stroke-linejoin="round"/>
<rect x="2223.4" y="401" width="44.2" height="1271.7" rx="5" fill="#8c8c8c"/>
<rect x="2227.4" y="405" width="36.2" height="1118" rx="4" fill="#262626"/>
<rect x="2223.4" y="1683.6" width="44.2" height="44.7" rx="5" fill="#8c8c8c"/>
<path d="M2245.4,1692.9 V1718 M2232.2,1702.4 L2245.4,1718.3 L2258.6,1702.4" fill="none" stroke="#262626" stroke-width="2.8" stroke-linecap="round" stroke-linejoin="round"/>
<rect x="306" y="1746" width="44.6" height="44" rx="5" fill="#8c8c8c"/>
<path d="M341.6,1768.2 H316 M332.7,1755.6 L315.4,1768.2 L332.7,1780.8" fill="none" stroke="#262626" stroke-width="2.8" stroke-linecap="round" stroke-linejoin="round"/>
<rect x="360.2" y="1746" width="1789.8" height="44.7" rx="5" fill="#8c8c8c"/>
<rect x="364.2" y="1750" width="1623.4" height="36.7" rx="4" fill="#262626"/>
<rect x="2160" y="1746" width="44.8" height="44.7" rx="5" fill="#8c8c8c"/>
<path d="M2169.2,1768.2 H2195 M2178.1,1755.6 L2195.4,1768.2 L2178.1,1780.8" fill="none" stroke="#262626" stroke-width="2.8" stroke-linecap="round" stroke-linejoin="round"/>
<rect x="2476.6" y="1680.7" width="335.8" height="2" fill="#4d4d4d"/>
</svg>
<div class="t" style="top:430.3px;font-size:26.2px;color:#222222;-webkit-text-stroke:0.94px #222222;letter-spacing:0.72px;left:1805.5px;">16:28 (сейчас)</div>
</body></html>
